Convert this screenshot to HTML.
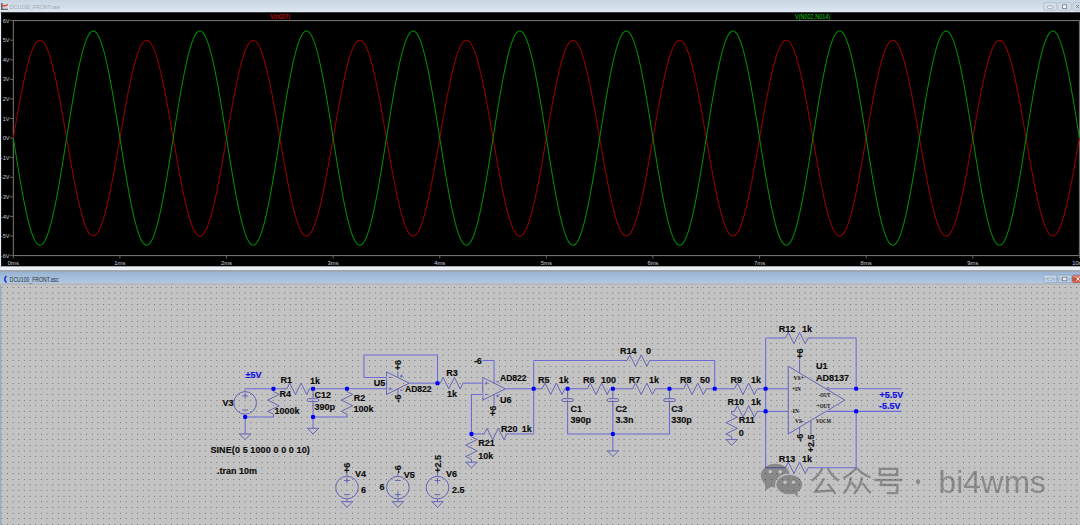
<!DOCTYPE html><html><head><meta charset="utf-8"><style>
html,body{margin:0;padding:0;background:#c3c3c3;width:1080px;height:525px;overflow:hidden}
svg{display:block}
text{font-family:"Liberation Sans",sans-serif}
.t{font-weight:bold;font-size:9px;fill:#0c0c0c;stroke:#0c0c0c;stroke-width:0.15px}
.b{font-weight:bold;font-size:9px;fill:#1010e0;stroke:#1010e0;stroke-width:0.15px}
.ax{font-size:5.7px;fill:#c4ccd8}
.w{stroke:#6a6ad8;stroke-width:1.05;fill:none}
.h{stroke:#c3c3c3;stroke-width:2.6;fill:none}
.c{stroke:#6060b8;stroke-width:0.95;fill:none}
.p{font-size:5.2px;font-weight:bold;fill:#101010;font-family:"Liberation Serif",serif}
</style></head><body>
<svg width="1080" height="525" viewBox="0 0 1080 525">
<defs>
<linearGradient id="tb1" x1="0" y1="0" x2="0" y2="1"><stop offset="0" stop-color="#c8d5e3"/><stop offset="1" stop-color="#dde7f2"/></linearGradient>
<linearGradient id="bt" x1="0" y1="0" x2="0" y2="1"><stop offset="0" stop-color="#d4e2f0"/><stop offset="0.5" stop-color="#a8c0dc"/><stop offset="1" stop-color="#c4d6ea"/></linearGradient>
<linearGradient id="tb2" x1="0" y1="0" x2="0" y2="1"><stop offset="0" stop-color="#98b3d3"/><stop offset="1" stop-color="#b2c9e3"/></linearGradient>
<pattern id="dots" x="24" y="292" width="130" height="130" patternUnits="userSpaceOnUse"><g fill="#8a8a8a"><rect x="0" y="0" width="1" height="1"/><rect x="6" y="0" width="1" height="1"/><rect x="11" y="0" width="1" height="1"/><rect x="17" y="0" width="1" height="1"/><rect x="23" y="0" width="1" height="1"/><rect x="28" y="0" width="1" height="1"/><rect x="34" y="0" width="1" height="1"/><rect x="40" y="0" width="1" height="1"/><rect x="45" y="0" width="1" height="1"/><rect x="51" y="0" width="1" height="1"/><rect x="57" y="0" width="1" height="1"/><rect x="62" y="0" width="1" height="1"/><rect x="68" y="0" width="1" height="1"/><rect x="73" y="0" width="1" height="1"/><rect x="79" y="0" width="1" height="1"/><rect x="85" y="0" width="1" height="1"/><rect x="90" y="0" width="1" height="1"/><rect x="96" y="0" width="1" height="1"/><rect x="102" y="0" width="1" height="1"/><rect x="107" y="0" width="1" height="1"/><rect x="113" y="0" width="1" height="1"/><rect x="119" y="0" width="1" height="1"/><rect x="124" y="0" width="1" height="1"/><rect x="0" y="6" width="1" height="1"/><rect x="6" y="6" width="1" height="1"/><rect x="11" y="6" width="1" height="1"/><rect x="17" y="6" width="1" height="1"/><rect x="23" y="6" width="1" height="1"/><rect x="28" y="6" width="1" height="1"/><rect x="34" y="6" width="1" height="1"/><rect x="40" y="6" width="1" height="1"/><rect x="45" y="6" width="1" height="1"/><rect x="51" y="6" width="1" height="1"/><rect x="57" y="6" width="1" height="1"/><rect x="62" y="6" width="1" height="1"/><rect x="68" y="6" width="1" height="1"/><rect x="73" y="6" width="1" height="1"/><rect x="79" y="6" width="1" height="1"/><rect x="85" y="6" width="1" height="1"/><rect x="90" y="6" width="1" height="1"/><rect x="96" y="6" width="1" height="1"/><rect x="102" y="6" width="1" height="1"/><rect x="107" y="6" width="1" height="1"/><rect x="113" y="6" width="1" height="1"/><rect x="119" y="6" width="1" height="1"/><rect x="124" y="6" width="1" height="1"/><rect x="0" y="12" width="1" height="1"/><rect x="6" y="12" width="1" height="1"/><rect x="11" y="12" width="1" height="1"/><rect x="17" y="12" width="1" height="1"/><rect x="23" y="12" width="1" height="1"/><rect x="28" y="12" width="1" height="1"/><rect x="34" y="12" width="1" height="1"/><rect x="40" y="12" width="1" height="1"/><rect x="45" y="12" width="1" height="1"/><rect x="51" y="12" width="1" height="1"/><rect x="57" y="12" width="1" height="1"/><rect x="62" y="12" width="1" height="1"/><rect x="68" y="12" width="1" height="1"/><rect x="73" y="12" width="1" height="1"/><rect x="79" y="12" width="1" height="1"/><rect x="85" y="12" width="1" height="1"/><rect x="90" y="12" width="1" height="1"/><rect x="96" y="12" width="1" height="1"/><rect x="102" y="12" width="1" height="1"/><rect x="107" y="12" width="1" height="1"/><rect x="113" y="12" width="1" height="1"/><rect x="119" y="12" width="1" height="1"/><rect x="124" y="12" width="1" height="1"/><rect x="0" y="17" width="1" height="1"/><rect x="6" y="17" width="1" height="1"/><rect x="11" y="17" width="1" height="1"/><rect x="17" y="17" width="1" height="1"/><rect x="23" y="17" width="1" height="1"/><rect x="28" y="17" width="1" height="1"/><rect x="34" y="17" width="1" height="1"/><rect x="40" y="17" width="1" height="1"/><rect x="45" y="17" width="1" height="1"/><rect x="51" y="17" width="1" height="1"/><rect x="57" y="17" width="1" height="1"/><rect x="62" y="17" width="1" height="1"/><rect x="68" y="17" width="1" height="1"/><rect x="73" y="17" width="1" height="1"/><rect x="79" y="17" width="1" height="1"/><rect x="85" y="17" width="1" height="1"/><rect x="90" y="17" width="1" height="1"/><rect x="96" y="17" width="1" height="1"/><rect x="102" y="17" width="1" height="1"/><rect x="107" y="17" width="1" height="1"/><rect x="113" y="17" width="1" height="1"/><rect x="119" y="17" width="1" height="1"/><rect x="124" y="17" width="1" height="1"/><rect x="0" y="23" width="1" height="1"/><rect x="6" y="23" width="1" height="1"/><rect x="11" y="23" width="1" height="1"/><rect x="17" y="23" width="1" height="1"/><rect x="23" y="23" width="1" height="1"/><rect x="28" y="23" width="1" height="1"/><rect x="34" y="23" width="1" height="1"/><rect x="40" y="23" width="1" height="1"/><rect x="45" y="23" width="1" height="1"/><rect x="51" y="23" width="1" height="1"/><rect x="57" y="23" width="1" height="1"/><rect x="62" y="23" width="1" height="1"/><rect x="68" y="23" width="1" height="1"/><rect x="73" y="23" width="1" height="1"/><rect x="79" y="23" width="1" height="1"/><rect x="85" y="23" width="1" height="1"/><rect x="90" y="23" width="1" height="1"/><rect x="96" y="23" width="1" height="1"/><rect x="102" y="23" width="1" height="1"/><rect x="107" y="23" width="1" height="1"/><rect x="113" y="23" width="1" height="1"/><rect x="119" y="23" width="1" height="1"/><rect x="124" y="23" width="1" height="1"/><rect x="0" y="29" width="1" height="1"/><rect x="6" y="29" width="1" height="1"/><rect x="11" y="29" width="1" height="1"/><rect x="17" y="29" width="1" height="1"/><rect x="23" y="29" width="1" height="1"/><rect x="28" y="29" width="1" height="1"/><rect x="34" y="29" width="1" height="1"/><rect x="40" y="29" width="1" height="1"/><rect x="45" y="29" width="1" height="1"/><rect x="51" y="29" width="1" height="1"/><rect x="57" y="29" width="1" height="1"/><rect x="62" y="29" width="1" height="1"/><rect x="68" y="29" width="1" height="1"/><rect x="73" y="29" width="1" height="1"/><rect x="79" y="29" width="1" height="1"/><rect x="85" y="29" width="1" height="1"/><rect x="90" y="29" width="1" height="1"/><rect x="96" y="29" width="1" height="1"/><rect x="102" y="29" width="1" height="1"/><rect x="107" y="29" width="1" height="1"/><rect x="113" y="29" width="1" height="1"/><rect x="119" y="29" width="1" height="1"/><rect x="124" y="29" width="1" height="1"/><rect x="0" y="34" width="1" height="1"/><rect x="6" y="34" width="1" height="1"/><rect x="11" y="34" width="1" height="1"/><rect x="17" y="34" width="1" height="1"/><rect x="23" y="34" width="1" height="1"/><rect x="28" y="34" width="1" height="1"/><rect x="34" y="34" width="1" height="1"/><rect x="40" y="34" width="1" height="1"/><rect x="45" y="34" width="1" height="1"/><rect x="51" y="34" width="1" height="1"/><rect x="57" y="34" width="1" height="1"/><rect x="62" y="34" width="1" height="1"/><rect x="68" y="34" width="1" height="1"/><rect x="73" y="34" width="1" height="1"/><rect x="79" y="34" width="1" height="1"/><rect x="85" y="34" width="1" height="1"/><rect x="90" y="34" width="1" height="1"/><rect x="96" y="34" width="1" height="1"/><rect x="102" y="34" width="1" height="1"/><rect x="107" y="34" width="1" height="1"/><rect x="113" y="34" width="1" height="1"/><rect x="119" y="34" width="1" height="1"/><rect x="124" y="34" width="1" height="1"/><rect x="0" y="40" width="1" height="1"/><rect x="6" y="40" width="1" height="1"/><rect x="11" y="40" width="1" height="1"/><rect x="17" y="40" width="1" height="1"/><rect x="23" y="40" width="1" height="1"/><rect x="28" y="40" width="1" height="1"/><rect x="34" y="40" width="1" height="1"/><rect x="40" y="40" width="1" height="1"/><rect x="45" y="40" width="1" height="1"/><rect x="51" y="40" width="1" height="1"/><rect x="57" y="40" width="1" height="1"/><rect x="62" y="40" width="1" height="1"/><rect x="68" y="40" width="1" height="1"/><rect x="73" y="40" width="1" height="1"/><rect x="79" y="40" width="1" height="1"/><rect x="85" y="40" width="1" height="1"/><rect x="90" y="40" width="1" height="1"/><rect x="96" y="40" width="1" height="1"/><rect x="102" y="40" width="1" height="1"/><rect x="107" y="40" width="1" height="1"/><rect x="113" y="40" width="1" height="1"/><rect x="119" y="40" width="1" height="1"/><rect x="124" y="40" width="1" height="1"/><rect x="0" y="45" width="1" height="1"/><rect x="6" y="45" width="1" height="1"/><rect x="11" y="45" width="1" height="1"/><rect x="17" y="45" width="1" height="1"/><rect x="23" y="45" width="1" height="1"/><rect x="28" y="45" width="1" height="1"/><rect x="34" y="45" width="1" height="1"/><rect x="40" y="45" width="1" height="1"/><rect x="45" y="45" width="1" height="1"/><rect x="51" y="45" width="1" height="1"/><rect x="57" y="45" width="1" height="1"/><rect x="62" y="45" width="1" height="1"/><rect x="68" y="45" width="1" height="1"/><rect x="73" y="45" width="1" height="1"/><rect x="79" y="45" width="1" height="1"/><rect x="85" y="45" width="1" height="1"/><rect x="90" y="45" width="1" height="1"/><rect x="96" y="45" width="1" height="1"/><rect x="102" y="45" width="1" height="1"/><rect x="107" y="45" width="1" height="1"/><rect x="113" y="45" width="1" height="1"/><rect x="119" y="45" width="1" height="1"/><rect x="124" y="45" width="1" height="1"/><rect x="0" y="51" width="1" height="1"/><rect x="6" y="51" width="1" height="1"/><rect x="11" y="51" width="1" height="1"/><rect x="17" y="51" width="1" height="1"/><rect x="23" y="51" width="1" height="1"/><rect x="28" y="51" width="1" height="1"/><rect x="34" y="51" width="1" height="1"/><rect x="40" y="51" width="1" height="1"/><rect x="45" y="51" width="1" height="1"/><rect x="51" y="51" width="1" height="1"/><rect x="57" y="51" width="1" height="1"/><rect x="62" y="51" width="1" height="1"/><rect x="68" y="51" width="1" height="1"/><rect x="73" y="51" width="1" height="1"/><rect x="79" y="51" width="1" height="1"/><rect x="85" y="51" width="1" height="1"/><rect x="90" y="51" width="1" height="1"/><rect x="96" y="51" width="1" height="1"/><rect x="102" y="51" width="1" height="1"/><rect x="107" y="51" width="1" height="1"/><rect x="113" y="51" width="1" height="1"/><rect x="119" y="51" width="1" height="1"/><rect x="124" y="51" width="1" height="1"/><rect x="0" y="57" width="1" height="1"/><rect x="6" y="57" width="1" height="1"/><rect x="11" y="57" width="1" height="1"/><rect x="17" y="57" width="1" height="1"/><rect x="23" y="57" width="1" height="1"/><rect x="28" y="57" width="1" height="1"/><rect x="34" y="57" width="1" height="1"/><rect x="40" y="57" width="1" height="1"/><rect x="45" y="57" width="1" height="1"/><rect x="51" y="57" width="1" height="1"/><rect x="57" y="57" width="1" height="1"/><rect x="62" y="57" width="1" height="1"/><rect x="68" y="57" width="1" height="1"/><rect x="73" y="57" width="1" height="1"/><rect x="79" y="57" width="1" height="1"/><rect x="85" y="57" width="1" height="1"/><rect x="90" y="57" width="1" height="1"/><rect x="96" y="57" width="1" height="1"/><rect x="102" y="57" width="1" height="1"/><rect x="107" y="57" width="1" height="1"/><rect x="113" y="57" width="1" height="1"/><rect x="119" y="57" width="1" height="1"/><rect x="124" y="57" width="1" height="1"/><rect x="0" y="62" width="1" height="1"/><rect x="6" y="62" width="1" height="1"/><rect x="11" y="62" width="1" height="1"/><rect x="17" y="62" width="1" height="1"/><rect x="23" y="62" width="1" height="1"/><rect x="28" y="62" width="1" height="1"/><rect x="34" y="62" width="1" height="1"/><rect x="40" y="62" width="1" height="1"/><rect x="45" y="62" width="1" height="1"/><rect x="51" y="62" width="1" height="1"/><rect x="57" y="62" width="1" height="1"/><rect x="62" y="62" width="1" height="1"/><rect x="68" y="62" width="1" height="1"/><rect x="73" y="62" width="1" height="1"/><rect x="79" y="62" width="1" height="1"/><rect x="85" y="62" width="1" height="1"/><rect x="90" y="62" width="1" height="1"/><rect x="96" y="62" width="1" height="1"/><rect x="102" y="62" width="1" height="1"/><rect x="107" y="62" width="1" height="1"/><rect x="113" y="62" width="1" height="1"/><rect x="119" y="62" width="1" height="1"/><rect x="124" y="62" width="1" height="1"/><rect x="0" y="68" width="1" height="1"/><rect x="6" y="68" width="1" height="1"/><rect x="11" y="68" width="1" height="1"/><rect x="17" y="68" width="1" height="1"/><rect x="23" y="68" width="1" height="1"/><rect x="28" y="68" width="1" height="1"/><rect x="34" y="68" width="1" height="1"/><rect x="40" y="68" width="1" height="1"/><rect x="45" y="68" width="1" height="1"/><rect x="51" y="68" width="1" height="1"/><rect x="57" y="68" width="1" height="1"/><rect x="62" y="68" width="1" height="1"/><rect x="68" y="68" width="1" height="1"/><rect x="73" y="68" width="1" height="1"/><rect x="79" y="68" width="1" height="1"/><rect x="85" y="68" width="1" height="1"/><rect x="90" y="68" width="1" height="1"/><rect x="96" y="68" width="1" height="1"/><rect x="102" y="68" width="1" height="1"/><rect x="107" y="68" width="1" height="1"/><rect x="113" y="68" width="1" height="1"/><rect x="119" y="68" width="1" height="1"/><rect x="124" y="68" width="1" height="1"/><rect x="0" y="74" width="1" height="1"/><rect x="6" y="74" width="1" height="1"/><rect x="11" y="74" width="1" height="1"/><rect x="17" y="74" width="1" height="1"/><rect x="23" y="74" width="1" height="1"/><rect x="28" y="74" width="1" height="1"/><rect x="34" y="74" width="1" height="1"/><rect x="40" y="74" width="1" height="1"/><rect x="45" y="74" width="1" height="1"/><rect x="51" y="74" width="1" height="1"/><rect x="57" y="74" width="1" height="1"/><rect x="62" y="74" width="1" height="1"/><rect x="68" y="74" width="1" height="1"/><rect x="73" y="74" width="1" height="1"/><rect x="79" y="74" width="1" height="1"/><rect x="85" y="74" width="1" height="1"/><rect x="90" y="74" width="1" height="1"/><rect x="96" y="74" width="1" height="1"/><rect x="102" y="74" width="1" height="1"/><rect x="107" y="74" width="1" height="1"/><rect x="113" y="74" width="1" height="1"/><rect x="119" y="74" width="1" height="1"/><rect x="124" y="74" width="1" height="1"/><rect x="0" y="79" width="1" height="1"/><rect x="6" y="79" width="1" height="1"/><rect x="11" y="79" width="1" height="1"/><rect x="17" y="79" width="1" height="1"/><rect x="23" y="79" width="1" height="1"/><rect x="28" y="79" width="1" height="1"/><rect x="34" y="79" width="1" height="1"/><rect x="40" y="79" width="1" height="1"/><rect x="45" y="79" width="1" height="1"/><rect x="51" y="79" width="1" height="1"/><rect x="57" y="79" width="1" height="1"/><rect x="62" y="79" width="1" height="1"/><rect x="68" y="79" width="1" height="1"/><rect x="73" y="79" width="1" height="1"/><rect x="79" y="79" width="1" height="1"/><rect x="85" y="79" width="1" height="1"/><rect x="90" y="79" width="1" height="1"/><rect x="96" y="79" width="1" height="1"/><rect x="102" y="79" width="1" height="1"/><rect x="107" y="79" width="1" height="1"/><rect x="113" y="79" width="1" height="1"/><rect x="119" y="79" width="1" height="1"/><rect x="124" y="79" width="1" height="1"/><rect x="0" y="85" width="1" height="1"/><rect x="6" y="85" width="1" height="1"/><rect x="11" y="85" width="1" height="1"/><rect x="17" y="85" width="1" height="1"/><rect x="23" y="85" width="1" height="1"/><rect x="28" y="85" width="1" height="1"/><rect x="34" y="85" width="1" height="1"/><rect x="40" y="85" width="1" height="1"/><rect x="45" y="85" width="1" height="1"/><rect x="51" y="85" width="1" height="1"/><rect x="57" y="85" width="1" height="1"/><rect x="62" y="85" width="1" height="1"/><rect x="68" y="85" width="1" height="1"/><rect x="73" y="85" width="1" height="1"/><rect x="79" y="85" width="1" height="1"/><rect x="85" y="85" width="1" height="1"/><rect x="90" y="85" width="1" height="1"/><rect x="96" y="85" width="1" height="1"/><rect x="102" y="85" width="1" height="1"/><rect x="107" y="85" width="1" height="1"/><rect x="113" y="85" width="1" height="1"/><rect x="119" y="85" width="1" height="1"/><rect x="124" y="85" width="1" height="1"/><rect x="0" y="91" width="1" height="1"/><rect x="6" y="91" width="1" height="1"/><rect x="11" y="91" width="1" height="1"/><rect x="17" y="91" width="1" height="1"/><rect x="23" y="91" width="1" height="1"/><rect x="28" y="91" width="1" height="1"/><rect x="34" y="91" width="1" height="1"/><rect x="40" y="91" width="1" height="1"/><rect x="45" y="91" width="1" height="1"/><rect x="51" y="91" width="1" height="1"/><rect x="57" y="91" width="1" height="1"/><rect x="62" y="91" width="1" height="1"/><rect x="68" y="91" width="1" height="1"/><rect x="73" y="91" width="1" height="1"/><rect x="79" y="91" width="1" height="1"/><rect x="85" y="91" width="1" height="1"/><rect x="90" y="91" width="1" height="1"/><rect x="96" y="91" width="1" height="1"/><rect x="102" y="91" width="1" height="1"/><rect x="107" y="91" width="1" height="1"/><rect x="113" y="91" width="1" height="1"/><rect x="119" y="91" width="1" height="1"/><rect x="124" y="91" width="1" height="1"/><rect x="0" y="96" width="1" height="1"/><rect x="6" y="96" width="1" height="1"/><rect x="11" y="96" width="1" height="1"/><rect x="17" y="96" width="1" height="1"/><rect x="23" y="96" width="1" height="1"/><rect x="28" y="96" width="1" height="1"/><rect x="34" y="96" width="1" height="1"/><rect x="40" y="96" width="1" height="1"/><rect x="45" y="96" width="1" height="1"/><rect x="51" y="96" width="1" height="1"/><rect x="57" y="96" width="1" height="1"/><rect x="62" y="96" width="1" height="1"/><rect x="68" y="96" width="1" height="1"/><rect x="73" y="96" width="1" height="1"/><rect x="79" y="96" width="1" height="1"/><rect x="85" y="96" width="1" height="1"/><rect x="90" y="96" width="1" height="1"/><rect x="96" y="96" width="1" height="1"/><rect x="102" y="96" width="1" height="1"/><rect x="107" y="96" width="1" height="1"/><rect x="113" y="96" width="1" height="1"/><rect x="119" y="96" width="1" height="1"/><rect x="124" y="96" width="1" height="1"/><rect x="0" y="102" width="1" height="1"/><rect x="6" y="102" width="1" height="1"/><rect x="11" y="102" width="1" height="1"/><rect x="17" y="102" width="1" height="1"/><rect x="23" y="102" width="1" height="1"/><rect x="28" y="102" width="1" height="1"/><rect x="34" y="102" width="1" height="1"/><rect x="40" y="102" width="1" height="1"/><rect x="45" y="102" width="1" height="1"/><rect x="51" y="102" width="1" height="1"/><rect x="57" y="102" width="1" height="1"/><rect x="62" y="102" width="1" height="1"/><rect x="68" y="102" width="1" height="1"/><rect x="73" y="102" width="1" height="1"/><rect x="79" y="102" width="1" height="1"/><rect x="85" y="102" width="1" height="1"/><rect x="90" y="102" width="1" height="1"/><rect x="96" y="102" width="1" height="1"/><rect x="102" y="102" width="1" height="1"/><rect x="107" y="102" width="1" height="1"/><rect x="113" y="102" width="1" height="1"/><rect x="119" y="102" width="1" height="1"/><rect x="124" y="102" width="1" height="1"/><rect x="0" y="108" width="1" height="1"/><rect x="6" y="108" width="1" height="1"/><rect x="11" y="108" width="1" height="1"/><rect x="17" y="108" width="1" height="1"/><rect x="23" y="108" width="1" height="1"/><rect x="28" y="108" width="1" height="1"/><rect x="34" y="108" width="1" height="1"/><rect x="40" y="108" width="1" height="1"/><rect x="45" y="108" width="1" height="1"/><rect x="51" y="108" width="1" height="1"/><rect x="57" y="108" width="1" height="1"/><rect x="62" y="108" width="1" height="1"/><rect x="68" y="108" width="1" height="1"/><rect x="73" y="108" width="1" height="1"/><rect x="79" y="108" width="1" height="1"/><rect x="85" y="108" width="1" height="1"/><rect x="90" y="108" width="1" height="1"/><rect x="96" y="108" width="1" height="1"/><rect x="102" y="108" width="1" height="1"/><rect x="107" y="108" width="1" height="1"/><rect x="113" y="108" width="1" height="1"/><rect x="119" y="108" width="1" height="1"/><rect x="124" y="108" width="1" height="1"/><rect x="0" y="113" width="1" height="1"/><rect x="6" y="113" width="1" height="1"/><rect x="11" y="113" width="1" height="1"/><rect x="17" y="113" width="1" height="1"/><rect x="23" y="113" width="1" height="1"/><rect x="28" y="113" width="1" height="1"/><rect x="34" y="113" width="1" height="1"/><rect x="40" y="113" width="1" height="1"/><rect x="45" y="113" width="1" height="1"/><rect x="51" y="113" width="1" height="1"/><rect x="57" y="113" width="1" height="1"/><rect x="62" y="113" width="1" height="1"/><rect x="68" y="113" width="1" height="1"/><rect x="73" y="113" width="1" height="1"/><rect x="79" y="113" width="1" height="1"/><rect x="85" y="113" width="1" height="1"/><rect x="90" y="113" width="1" height="1"/><rect x="96" y="113" width="1" height="1"/><rect x="102" y="113" width="1" height="1"/><rect x="107" y="113" width="1" height="1"/><rect x="113" y="113" width="1" height="1"/><rect x="119" y="113" width="1" height="1"/><rect x="124" y="113" width="1" height="1"/><rect x="0" y="119" width="1" height="1"/><rect x="6" y="119" width="1" height="1"/><rect x="11" y="119" width="1" height="1"/><rect x="17" y="119" width="1" height="1"/><rect x="23" y="119" width="1" height="1"/><rect x="28" y="119" width="1" height="1"/><rect x="34" y="119" width="1" height="1"/><rect x="40" y="119" width="1" height="1"/><rect x="45" y="119" width="1" height="1"/><rect x="51" y="119" width="1" height="1"/><rect x="57" y="119" width="1" height="1"/><rect x="62" y="119" width="1" height="1"/><rect x="68" y="119" width="1" height="1"/><rect x="73" y="119" width="1" height="1"/><rect x="79" y="119" width="1" height="1"/><rect x="85" y="119" width="1" height="1"/><rect x="90" y="119" width="1" height="1"/><rect x="96" y="119" width="1" height="1"/><rect x="102" y="119" width="1" height="1"/><rect x="107" y="119" width="1" height="1"/><rect x="113" y="119" width="1" height="1"/><rect x="119" y="119" width="1" height="1"/><rect x="124" y="119" width="1" height="1"/><rect x="0" y="125" width="1" height="1"/><rect x="6" y="125" width="1" height="1"/><rect x="11" y="125" width="1" height="1"/><rect x="17" y="125" width="1" height="1"/><rect x="23" y="125" width="1" height="1"/><rect x="28" y="125" width="1" height="1"/><rect x="34" y="125" width="1" height="1"/><rect x="40" y="125" width="1" height="1"/><rect x="45" y="125" width="1" height="1"/><rect x="51" y="125" width="1" height="1"/><rect x="57" y="125" width="1" height="1"/><rect x="62" y="125" width="1" height="1"/><rect x="68" y="125" width="1" height="1"/><rect x="73" y="125" width="1" height="1"/><rect x="79" y="125" width="1" height="1"/><rect x="85" y="125" width="1" height="1"/><rect x="90" y="125" width="1" height="1"/><rect x="96" y="125" width="1" height="1"/><rect x="102" y="125" width="1" height="1"/><rect x="107" y="125" width="1" height="1"/><rect x="113" y="125" width="1" height="1"/><rect x="119" y="125" width="1" height="1"/><rect x="124" y="125" width="1" height="1"/></g></pattern>
</defs>

<rect x="0" y="0" width="1080" height="12.3" fill="url(#tb1)"/>
<rect x="1.2" y="3" width="6.8" height="6.8" fill="#d4d6d8"/><rect x="1.2" y="3" width="1.3" height="6.8" fill="#505050"/><rect x="1.2" y="8.8" width="6.8" height="1" fill="#505050"/><path d="M2.2 6.6 L3.8 5.4 L5 6.2 L7.8 4.6" stroke="#e82020" stroke-width="1.1" fill="none"/>
<text x="10" y="8.8" textLength="50" lengthAdjust="spacingAndGlyphs" style="font-size:6.2px;fill:#a0a6ae">DCU100_FRONT.raw</text>
<rect x="1043.4" y="2.6" width="13.3" height="7.8" rx="1.5" fill="#d3dde8" stroke="#a9b7c7" stroke-width="0.7"/>
<rect x="1058" y="2.6" width="13.3" height="7.8" rx="1.5" fill="#d3dde8" stroke="#a9b7c7" stroke-width="0.7"/>
<rect x="1047.4" y="6" width="5.5" height="2.4" rx="1.2" fill="#f4f6f8" stroke="#7c848e" stroke-width="0.6"/>
<rect x="1062.5" y="4.8" width="4.2" height="3.6" fill="#f4f6f8" stroke="#7c848e" stroke-width="0.9"/>
<rect x="1073" y="2.6" width="10" height="7.8" rx="1.5" fill="#d3dde8" stroke="#a9b7c7" stroke-width="0.7"/><path d="M1076 4.8 L1079 8.2 M1079 4.8 L1076 8.2" stroke="#7c848e" stroke-width="1"/>
<rect x="0" y="12.3" width="1080" height="254.2" fill="#000"/>
<rect x="0" y="12.3" width="1.1" height="254.2" fill="#e6ecf3"/>
<path d="M13.3 20.6 H1079.4 V255.6 H13.3 Z" stroke="#7c7c7c" stroke-width="1" fill="none"/>
<path d="M10 20.60 H13.3" stroke="#7c7c7c" stroke-width="0.8"/>
<text class="ax" x="9.6" y="22.70" text-anchor="end">6V</text>
<path d="M10 40.18 H13.3" stroke="#7c7c7c" stroke-width="0.8"/>
<text class="ax" x="9.6" y="42.28" text-anchor="end">5V</text>
<path d="M10 59.77 H13.3" stroke="#7c7c7c" stroke-width="0.8"/>
<text class="ax" x="9.6" y="61.87" text-anchor="end">4V</text>
<path d="M10 79.35 H13.3" stroke="#7c7c7c" stroke-width="0.8"/>
<text class="ax" x="9.6" y="81.45" text-anchor="end">3V</text>
<path d="M10 98.93 H13.3" stroke="#7c7c7c" stroke-width="0.8"/>
<text class="ax" x="9.6" y="101.03" text-anchor="end">2V</text>
<path d="M10 118.52 H13.3" stroke="#7c7c7c" stroke-width="0.8"/>
<text class="ax" x="9.6" y="120.62" text-anchor="end">1V</text>
<path d="M10 138.10 H13.3" stroke="#7c7c7c" stroke-width="0.8"/>
<text class="ax" x="9.6" y="140.20" text-anchor="end">0V</text>
<path d="M10 157.68 H13.3" stroke="#7c7c7c" stroke-width="0.8"/>
<text class="ax" x="9.6" y="159.78" text-anchor="end">-1V</text>
<path d="M10 177.27 H13.3" stroke="#7c7c7c" stroke-width="0.8"/>
<text class="ax" x="9.6" y="179.37" text-anchor="end">-2V</text>
<path d="M10 196.85 H13.3" stroke="#7c7c7c" stroke-width="0.8"/>
<text class="ax" x="9.6" y="198.95" text-anchor="end">-3V</text>
<path d="M10 216.43 H13.3" stroke="#7c7c7c" stroke-width="0.8"/>
<text class="ax" x="9.6" y="218.53" text-anchor="end">-4V</text>
<path d="M10 236.02 H13.3" stroke="#7c7c7c" stroke-width="0.8"/>
<text class="ax" x="9.6" y="238.12" text-anchor="end">-5V</text>
<path d="M10 255.60 H13.3" stroke="#7c7c7c" stroke-width="0.8"/>
<text class="ax" x="9.6" y="257.70" text-anchor="end">-6V</text>
<path d="M13.30 255.6 V258.5" stroke="#7c7c7c" stroke-width="0.8"/>
<text class="ax" x="13.30" y="264.7" text-anchor="middle" style="font-size:5.9px">0ms</text>
<path d="M119.91 255.6 V258.5" stroke="#7c7c7c" stroke-width="0.8"/>
<text class="ax" x="119.91" y="264.7" text-anchor="middle" style="font-size:5.9px">1ms</text>
<path d="M226.52 255.6 V258.5" stroke="#7c7c7c" stroke-width="0.8"/>
<text class="ax" x="226.52" y="264.7" text-anchor="middle" style="font-size:5.9px">2ms</text>
<path d="M333.13 255.6 V258.5" stroke="#7c7c7c" stroke-width="0.8"/>
<text class="ax" x="333.13" y="264.7" text-anchor="middle" style="font-size:5.9px">3ms</text>
<path d="M439.74 255.6 V258.5" stroke="#7c7c7c" stroke-width="0.8"/>
<text class="ax" x="439.74" y="264.7" text-anchor="middle" style="font-size:5.9px">4ms</text>
<path d="M546.35 255.6 V258.5" stroke="#7c7c7c" stroke-width="0.8"/>
<text class="ax" x="546.35" y="264.7" text-anchor="middle" style="font-size:5.9px">5ms</text>
<path d="M652.96 255.6 V258.5" stroke="#7c7c7c" stroke-width="0.8"/>
<text class="ax" x="652.96" y="264.7" text-anchor="middle" style="font-size:5.9px">6ms</text>
<path d="M759.57 255.6 V258.5" stroke="#7c7c7c" stroke-width="0.8"/>
<text class="ax" x="759.57" y="264.7" text-anchor="middle" style="font-size:5.9px">7ms</text>
<path d="M866.18 255.6 V258.5" stroke="#7c7c7c" stroke-width="0.8"/>
<text class="ax" x="866.18" y="264.7" text-anchor="middle" style="font-size:5.9px">8ms</text>
<path d="M972.79 255.6 V258.5" stroke="#7c7c7c" stroke-width="0.8"/>
<text class="ax" x="972.79" y="264.7" text-anchor="middle" style="font-size:5.9px">9ms</text>
<path d="M1079.40 255.6 V258.5" stroke="#7c7c7c" stroke-width="0.8"/>
<text class="ax" x="1079.40" y="264.7" text-anchor="middle" style="font-size:5.9px">10ms</text>
<text x="270.2" y="19.2" textLength="20" lengthAdjust="spacingAndGlyphs" style="font-size:6.9px;fill:#e41010">V(n007)</text>
<text x="795" y="19.2" textLength="35.2" lengthAdjust="spacingAndGlyphs" style="font-size:6.9px;fill:#10d010">V(N002,N014)</text>
<clipPath id="pc"><rect x="12.3" y="20.6" width="1068.1000000000001" height="235.0"/></clipPath><g clip-path="url(#pc)">
<path d="M13.3 138.10 L14.3 132.33 L15.3 126.59 L16.3 120.88 L17.3 115.23 L18.3 109.66 L19.3 104.19 L20.3 98.84 L21.3 93.62 L22.3 88.56 L23.3 83.67 L24.3 78.97 L25.3 74.48 L26.3 70.21 L27.3 66.17 L28.3 62.38 L29.3 58.85 L30.3 55.60 L31.3 52.64 L32.3 49.97 L33.3 47.61 L34.3 45.57 L35.3 43.84 L36.3 42.44 L37.3 41.38 L38.3 40.65 L39.3 40.26 L40.3 40.20 L41.3 40.49 L42.3 41.12 L43.3 42.08 L44.3 43.38 L45.3 45.01 L46.3 46.96 L47.3 49.22 L48.3 51.80 L49.3 54.67 L50.3 57.83 L51.3 61.28 L52.3 64.99 L53.3 68.95 L54.3 73.15 L55.3 77.58 L56.3 82.22 L57.3 87.05 L58.3 92.06 L59.3 97.23 L60.3 102.55 L61.3 107.98 L62.3 113.52 L63.3 119.15 L64.3 124.84 L65.3 130.58 L66.3 136.34 L67.3 142.11 L68.3 147.87 L69.3 153.59 L70.3 159.26 L71.3 164.85 L72.3 170.35 L73.3 175.74 L74.3 181.00 L75.3 186.11 L76.3 191.05 L77.3 195.81 L78.3 200.37 L79.3 204.71 L80.3 208.83 L81.3 212.69 L82.3 216.30 L83.3 219.63 L84.3 222.69 L85.3 225.44 L86.3 227.90 L87.3 230.04 L88.3 231.87 L89.3 233.37 L90.3 234.53 L91.3 235.37 L92.3 235.86 L93.3 236.02 L94.3 235.83 L95.3 235.31 L96.3 234.45 L97.3 233.25 L98.3 231.72 L99.3 229.87 L100.3 227.70 L101.3 225.22 L102.3 222.44 L103.3 219.36 L104.3 216.00 L105.3 212.37 L106.3 208.49 L107.3 204.35 L108.3 199.99 L109.3 195.42 L110.3 190.64 L111.3 185.68 L112.3 180.56 L113.3 175.29 L114.3 169.89 L115.3 164.38 L116.3 158.78 L117.3 153.10 L118.3 147.38 L119.3 141.62 L120.3 135.85 L121.3 130.09 L122.3 124.35 L123.3 118.67 L124.3 113.05 L125.3 107.52 L126.3 102.09 L127.3 96.79 L128.3 91.63 L129.3 86.64 L130.3 81.82 L131.3 77.20 L132.3 72.79 L133.3 68.60 L134.3 64.66 L135.3 60.97 L136.3 57.55 L137.3 54.41 L138.3 51.57 L139.3 49.02 L140.3 46.78 L141.3 44.86 L142.3 43.26 L143.3 41.99 L144.3 41.05 L145.3 40.45 L146.3 40.20 L147.3 40.28 L148.3 40.70 L149.3 41.45 L150.3 42.55 L151.3 43.98 L152.3 45.73 L153.3 47.80 L154.3 50.19 L155.3 52.88 L156.3 55.87 L157.3 59.14 L158.3 62.69 L159.3 66.50 L160.3 70.56 L161.3 74.85 L162.3 79.37 L163.3 84.08 L164.3 88.99 L165.3 94.06 L166.3 99.29 L167.3 104.65 L168.3 110.13 L169.3 115.71 L170.3 121.36 L171.3 127.07 L172.3 132.82 L173.3 138.59 L174.3 144.36 L175.3 150.10 L176.3 155.81 L177.3 161.45 L178.3 167.01 L179.3 172.47 L180.3 177.81 L181.3 183.01 L182.3 188.06 L183.3 192.93 L184.3 197.62 L185.3 202.09 L186.3 206.35 L187.3 210.36 L188.3 214.13 L189.3 217.63 L190.3 220.86 L191.3 223.80 L192.3 226.44 L193.3 228.77 L194.3 230.79 L195.3 232.49 L196.3 233.86 L197.3 234.90 L198.3 235.60 L199.3 235.96 L200.3 235.98 L201.3 235.67 L202.3 235.01 L203.3 234.02 L204.3 232.69 L205.3 231.04 L206.3 229.06 L207.3 226.77 L208.3 224.17 L209.3 221.27 L210.3 218.08 L211.3 214.62 L212.3 210.89 L213.3 206.90 L214.3 202.68 L215.3 198.23 L216.3 193.58 L217.3 188.73 L218.3 183.70 L219.3 178.52 L220.3 173.20 L221.3 167.75 L222.3 162.20 L223.3 156.57 L224.3 150.87 L225.3 145.13 L226.3 139.37 L227.3 133.60 L228.3 127.85 L229.3 122.13 L230.3 116.47 L231.3 110.88 L232.3 105.39 L233.3 100.01 L234.3 94.76 L235.3 89.66 L236.3 84.73 L237.3 79.99 L238.3 75.45 L239.3 71.13 L240.3 67.04 L241.3 63.19 L242.3 59.61 L243.3 56.30 L244.3 53.27 L245.3 50.54 L246.3 48.11 L247.3 45.99 L248.3 44.19 L249.3 42.72 L250.3 41.58 L251.3 40.78 L252.3 40.31 L253.3 40.19 L254.3 40.40 L255.3 40.95 L256.3 41.84 L257.3 43.07 L258.3 44.62 L259.3 46.50 L260.3 48.70 L261.3 51.20 L262.3 54.01 L263.3 57.11 L264.3 60.50 L265.3 64.15 L266.3 68.06 L267.3 72.21 L268.3 76.59 L269.3 81.18 L270.3 85.97 L271.3 90.95 L272.3 96.08 L273.3 101.37 L274.3 106.78 L275.3 112.30 L276.3 117.90 L277.3 123.58 L278.3 129.31 L279.3 135.07 L280.3 140.84 L281.3 146.60 L282.3 152.33 L283.3 158.01 L284.3 163.63 L285.3 169.15 L286.3 174.57 L287.3 179.86 L288.3 185.00 L289.3 189.98 L290.3 194.78 L291.3 199.39 L292.3 203.78 L293.3 207.94 L294.3 211.86 L295.3 215.53 L296.3 218.92 L297.3 222.04 L298.3 224.86 L299.3 227.39 L300.3 229.60 L301.3 231.49 L302.3 233.06 L303.3 234.30 L304.3 235.21 L305.3 235.78 L306.3 236.01 L307.3 235.90 L308.3 235.45 L309.3 234.67 L310.3 233.54 L311.3 232.09 L312.3 230.31 L313.3 228.21 L314.3 225.79 L315.3 223.08 L316.3 220.06 L317.3 216.76 L318.3 213.19 L319.3 209.36 L320.3 205.28 L321.3 200.97 L322.3 196.44 L323.3 191.71 L324.3 186.79 L325.3 181.70 L326.3 176.46 L327.3 171.09 L328.3 165.60 L329.3 160.02 L330.3 154.36 L331.3 148.64 L332.3 142.89 L333.3 137.12 L334.3 131.35 L335.3 125.61 L336.3 119.91 L337.3 114.28 L338.3 108.72 L339.3 103.27 L340.3 97.94 L341.3 92.75 L342.3 87.72 L343.3 82.86 L344.3 78.20 L345.3 73.74 L346.3 69.50 L347.3 65.51 L348.3 61.76 L349.3 58.28 L350.3 55.08 L351.3 52.17 L352.3 49.55 L353.3 47.24 L354.3 45.25 L355.3 43.58 L356.3 42.24 L357.3 41.23 L358.3 40.56 L359.3 40.22 L360.3 40.23 L361.3 40.57 L362.3 41.26 L363.3 42.28 L364.3 43.63 L365.3 45.31 L366.3 47.32 L367.3 49.64 L368.3 52.26 L369.3 55.19 L370.3 58.40 L371.3 61.89 L372.3 65.64 L373.3 69.65 L374.3 73.89 L375.3 78.36 L376.3 83.03 L377.3 87.89 L378.3 92.93 L379.3 98.13 L380.3 103.46 L381.3 108.92 L382.3 114.47 L383.3 120.11 L384.3 125.81 L385.3 131.55 L386.3 137.32 L387.3 143.09 L388.3 148.84 L389.3 154.55 L390.3 160.21 L391.3 165.79 L392.3 171.28 L393.3 176.64 L394.3 181.88 L395.3 186.96 L396.3 191.88 L397.3 196.60 L398.3 201.13 L399.3 205.43 L400.3 209.50 L401.3 213.32 L402.3 216.88 L403.3 220.17 L404.3 223.18 L405.3 225.88 L406.3 228.29 L407.3 230.38 L408.3 232.14 L409.3 233.59 L410.3 234.70 L411.3 235.47 L412.3 235.91 L413.3 236.01 L414.3 235.77 L415.3 235.19 L416.3 234.27 L417.3 233.01 L418.3 231.43 L419.3 229.53 L420.3 227.30 L421.3 224.77 L422.3 221.94 L423.3 218.81 L424.3 215.40 L425.3 211.73 L426.3 207.80 L427.3 203.63 L428.3 199.23 L429.3 194.62 L430.3 189.81 L431.3 184.82 L432.3 179.67 L433.3 174.38 L434.3 168.96 L435.3 163.43 L436.3 157.82 L437.3 152.13 L438.3 146.40 L439.3 140.64 L440.3 134.87 L441.3 129.11 L442.3 123.38 L443.3 117.71 L444.3 112.10 L445.3 106.59 L446.3 101.18 L447.3 95.90 L448.3 90.77 L449.3 85.80 L450.3 81.02 L451.3 76.43 L452.3 72.06 L453.3 67.92 L454.3 64.02 L455.3 60.37 L456.3 57.00 L457.3 53.91 L458.3 51.11 L459.3 48.61 L460.3 46.43 L461.3 44.56 L462.3 43.02 L463.3 41.81 L464.3 40.93 L465.3 40.39 L466.3 40.18 L467.3 40.32 L468.3 40.80 L469.3 41.62 L470.3 42.77 L471.3 44.25 L472.3 46.06 L473.3 48.19 L474.3 50.63 L475.3 53.37 L476.3 56.41 L477.3 59.73 L478.3 63.32 L479.3 67.17 L480.3 71.27 L481.3 75.61 L482.3 80.15 L483.3 84.90 L484.3 89.84 L485.3 94.94 L486.3 100.19 L487.3 105.58 L488.3 111.07 L489.3 116.66 L490.3 122.33 L491.3 128.05 L492.3 133.80 L493.3 139.57 L494.3 145.34 L495.3 151.07 L496.3 156.77 L497.3 162.40 L498.3 167.94 L499.3 173.38 L500.3 178.70 L501.3 183.88 L502.3 188.90 L503.3 193.74 L504.3 198.39 L505.3 202.83 L506.3 207.05 L507.3 211.02 L508.3 214.74 L509.3 218.20 L510.3 221.38 L511.3 224.27 L512.3 226.86 L513.3 229.14 L514.3 231.10 L515.3 232.75 L516.3 234.06 L517.3 235.04 L518.3 235.68 L519.3 235.99 L520.3 235.95 L521.3 235.58 L522.3 234.87 L523.3 233.82 L524.3 232.44 L525.3 230.73 L526.3 228.70 L527.3 226.35 L528.3 223.70 L529.3 220.75 L530.3 217.51 L531.3 214.00 L532.3 210.23 L533.3 206.20 L534.3 201.94 L535.3 197.45 L536.3 192.76 L537.3 187.88 L538.3 182.83 L539.3 177.62 L540.3 172.28 L541.3 166.81 L542.3 161.25 L543.3 155.61 L544.3 149.90 L545.3 144.16 L546.3 138.39 L547.3 132.62 L548.3 126.87 L549.3 121.16 L550.3 115.51 L551.3 109.94 L552.3 104.46 L553.3 99.10 L554.3 93.88 L555.3 88.81 L556.3 83.92 L557.3 79.21 L558.3 74.70 L559.3 70.41 L560.3 66.36 L561.3 62.56 L562.3 59.02 L563.3 55.76 L564.3 52.78 L565.3 50.10 L566.3 47.72 L567.3 45.66 L568.3 43.92 L569.3 42.51 L570.3 41.42 L571.3 40.68 L572.3 40.27 L573.3 40.20 L574.3 40.47 L575.3 41.08 L576.3 42.03 L577.3 43.31 L578.3 44.92 L579.3 46.85 L580.3 49.10 L581.3 51.66 L582.3 54.52 L583.3 57.67 L584.3 61.10 L585.3 64.79 L586.3 68.75 L587.3 72.94 L588.3 77.35 L589.3 81.98 L590.3 86.81 L591.3 91.81 L592.3 96.97 L593.3 102.28 L594.3 107.71 L595.3 113.24 L596.3 118.86 L597.3 124.55 L598.3 130.29 L599.3 136.05 L600.3 141.82 L601.3 147.58 L602.3 153.30 L603.3 158.97 L604.3 164.57 L605.3 170.08 L606.3 175.47 L607.3 180.74 L608.3 185.86 L609.3 190.81 L610.3 195.58 L611.3 200.15 L612.3 204.50 L613.3 208.63 L614.3 212.50 L615.3 216.12 L616.3 219.47 L617.3 222.54 L618.3 225.31 L619.3 227.78 L620.3 229.94 L621.3 231.78 L622.3 233.30 L623.3 234.48 L624.3 235.33 L625.3 235.84 L626.3 236.02 L627.3 235.85 L628.3 235.34 L629.3 234.50 L630.3 233.32 L631.3 231.81 L632.3 229.97 L633.3 227.82 L634.3 225.35 L635.3 222.58 L636.3 219.52 L637.3 216.18 L638.3 212.56 L639.3 208.69 L640.3 204.57 L641.3 200.22 L642.3 195.65 L643.3 190.88 L644.3 185.93 L645.3 180.82 L646.3 175.55 L647.3 170.16 L648.3 164.66 L649.3 159.06 L650.3 153.39 L651.3 147.66 L652.3 141.91 L653.3 136.14 L654.3 130.38 L655.3 124.64 L656.3 118.95 L657.3 113.33 L658.3 107.79 L659.3 102.36 L660.3 97.05 L661.3 91.89 L662.3 86.88 L663.3 82.05 L664.3 77.42 L665.3 73.00 L666.3 68.81 L667.3 64.85 L668.3 61.15 L669.3 57.72 L670.3 54.56 L671.3 51.70 L672.3 49.14 L673.3 46.88 L674.3 44.94 L675.3 43.33 L676.3 42.04 L677.3 41.09 L678.3 40.48 L679.3 40.20 L680.3 40.26 L681.3 40.67 L682.3 41.41 L683.3 42.49 L684.3 43.90 L685.3 45.63 L686.3 47.69 L687.3 50.06 L688.3 52.74 L689.3 55.71 L690.3 58.97 L691.3 62.51 L692.3 66.31 L693.3 70.35 L694.3 74.63 L695.3 79.14 L696.3 83.84 L697.3 88.74 L698.3 93.80 L699.3 99.03 L700.3 104.38 L701.3 109.85 L702.3 115.43 L703.3 121.08 L704.3 126.79 L705.3 132.53 L706.3 138.30 L707.3 144.07 L708.3 149.82 L709.3 155.52 L710.3 161.17 L711.3 166.73 L712.3 172.20 L713.3 177.54 L714.3 182.75 L715.3 187.81 L716.3 192.69 L717.3 197.39 L718.3 201.87 L719.3 206.14 L720.3 210.17 L721.3 213.95 L722.3 217.46 L723.3 220.70 L724.3 223.66 L725.3 226.31 L726.3 228.66 L727.3 230.70 L728.3 232.41 L729.3 233.80 L730.3 234.85 L731.3 235.57 L732.3 235.95 L733.3 235.99 L734.3 235.69 L735.3 235.05 L736.3 234.08 L737.3 232.77 L738.3 231.13 L739.3 229.17 L740.3 226.89 L741.3 224.31 L742.3 221.42 L743.3 218.25 L744.3 214.80 L745.3 211.08 L746.3 207.11 L747.3 202.90 L748.3 198.46 L749.3 193.81 L750.3 188.97 L751.3 183.96 L752.3 178.78 L753.3 173.47 L754.3 168.03 L755.3 162.48 L756.3 156.85 L757.3 151.16 L758.3 145.42 L759.3 139.66 L760.3 133.89 L761.3 128.13 L762.3 122.41 L763.3 116.75 L764.3 111.16 L765.3 105.66 L766.3 100.27 L767.3 95.02 L768.3 89.91 L769.3 84.98 L770.3 80.22 L771.3 75.67 L772.3 71.34 L773.3 67.23 L774.3 63.38 L775.3 59.78 L776.3 56.45 L777.3 53.41 L778.3 50.66 L779.3 48.22 L780.3 46.09 L781.3 44.28 L782.3 42.79 L783.3 41.63 L784.3 40.81 L785.3 40.33 L786.3 40.18 L787.3 40.38 L788.3 40.92 L789.3 41.79 L790.3 43.00 L791.3 44.53 L792.3 46.40 L793.3 48.58 L794.3 51.07 L795.3 53.87 L796.3 56.95 L797.3 60.32 L798.3 63.96 L799.3 67.85 L800.3 71.99 L801.3 76.36 L802.3 80.95 L803.3 85.73 L804.3 90.69 L805.3 95.82 L806.3 101.10 L807.3 106.50 L808.3 112.02 L809.3 117.62 L810.3 123.30 L811.3 129.02 L812.3 134.78 L813.3 140.55 L814.3 146.31 L815.3 152.05 L816.3 157.73 L817.3 163.35 L818.3 168.88 L819.3 174.30 L820.3 179.59 L821.3 184.75 L822.3 189.74 L823.3 194.55 L824.3 199.16 L825.3 203.56 L826.3 207.74 L827.3 211.67 L828.3 215.35 L829.3 218.76 L830.3 221.89 L831.3 224.73 L832.3 227.27 L833.3 229.50 L834.3 231.41 L835.3 232.99 L836.3 234.25 L837.3 235.17 L838.3 235.76 L839.3 236.01 L840.3 235.92 L841.3 235.48 L842.3 234.71 L843.3 233.61 L844.3 232.17 L845.3 230.40 L846.3 228.32 L847.3 225.92 L848.3 223.22 L849.3 220.22 L850.3 216.94 L851.3 213.38 L852.3 209.56 L853.3 205.49 L854.3 201.19 L855.3 196.67 L856.3 191.95 L857.3 187.04 L858.3 181.96 L859.3 176.72 L860.3 171.36 L861.3 165.88 L862.3 160.30 L863.3 154.64 L864.3 148.93 L865.3 143.18 L866.3 137.41 L867.3 131.64 L868.3 125.90 L869.3 120.20 L870.3 114.56 L871.3 109.00 L872.3 103.54 L873.3 98.21 L874.3 93.01 L875.3 87.97 L876.3 83.10 L877.3 78.42 L878.3 73.96 L879.3 69.71 L880.3 65.70 L881.3 61.94 L882.3 58.45 L883.3 55.23 L884.3 52.31 L885.3 49.67 L886.3 47.35 L887.3 45.34 L888.3 43.66 L889.3 42.30 L890.3 41.27 L891.3 40.58 L892.3 40.23 L893.3 40.22 L894.3 40.55 L895.3 41.22 L896.3 42.22 L897.3 43.56 L898.3 45.22 L899.3 47.21 L900.3 49.51 L901.3 52.13 L902.3 55.03 L903.3 58.23 L904.3 61.71 L905.3 65.45 L906.3 69.44 L907.3 73.67 L908.3 78.13 L909.3 82.79 L910.3 87.65 L911.3 92.68 L912.3 97.86 L913.3 103.19 L914.3 108.64 L915.3 114.19 L916.3 119.83 L917.3 125.53 L918.3 131.27 L919.3 137.03 L920.3 142.80 L921.3 148.55 L922.3 154.27 L923.3 159.93 L924.3 165.52 L925.3 171.00 L926.3 176.38 L927.3 181.62 L928.3 186.71 L929.3 191.63 L930.3 196.37 L931.3 200.90 L932.3 205.22 L933.3 209.30 L934.3 213.14 L935.3 216.71 L936.3 220.02 L937.3 223.03 L938.3 225.76 L939.3 228.17 L940.3 230.28 L941.3 232.06 L942.3 233.52 L943.3 234.65 L944.3 235.44 L945.3 235.90 L946.3 236.01 L947.3 235.79 L948.3 235.22 L949.3 234.32 L950.3 233.08 L951.3 231.52 L952.3 229.63 L953.3 227.42 L954.3 224.90 L955.3 222.08 L956.3 218.97 L957.3 215.58 L958.3 211.92 L959.3 208.00 L960.3 203.84 L961.3 199.45 L962.3 194.85 L963.3 190.05 L964.3 185.08 L965.3 179.93 L966.3 174.65 L967.3 169.23 L968.3 163.71 L969.3 158.10 L970.3 152.42 L971.3 146.69 L972.3 140.93 L973.3 135.16 L974.3 129.40 L975.3 123.67 L976.3 117.99 L977.3 112.38 L978.3 106.86 L979.3 101.45 L980.3 96.16 L981.3 91.02 L982.3 86.05 L983.3 81.25 L984.3 76.66 L985.3 72.27 L986.3 68.12 L987.3 64.20 L988.3 60.55 L989.3 57.16 L990.3 54.06 L991.3 51.24 L992.3 48.73 L993.3 46.53 L994.3 44.65 L995.3 43.09 L996.3 41.86 L997.3 40.96 L998.3 40.41 L999.3 40.19 L1000.3 40.31 L1001.3 40.77 L1002.3 41.57 L1003.3 42.70 L1004.3 44.17 L1005.3 45.96 L1006.3 48.07 L1007.3 50.50 L1008.3 53.22 L1009.3 56.25 L1010.3 59.56 L1011.3 63.14 L1012.3 66.98 L1013.3 71.06 L1014.3 75.38 L1015.3 79.92 L1016.3 84.66 L1017.3 89.59 L1018.3 94.68 L1019.3 99.93 L1020.3 105.30 L1021.3 110.80 L1022.3 116.38 L1023.3 122.04 L1024.3 127.76 L1025.3 133.51 L1026.3 139.28 L1027.3 145.05 L1028.3 150.79 L1029.3 156.49 L1030.3 162.12 L1031.3 167.67 L1032.3 173.12 L1033.3 178.44 L1034.3 183.63 L1035.3 188.65 L1036.3 193.50 L1037.3 198.16 L1038.3 202.61 L1039.3 206.84 L1040.3 210.83 L1041.3 214.56 L1042.3 218.03 L1043.3 221.23 L1044.3 224.13 L1045.3 226.73 L1046.3 229.03 L1047.3 231.01 L1048.3 232.67 L1049.3 234.00 L1050.3 235.00 L1051.3 235.66 L1052.3 235.98 L1053.3 235.96 L1054.3 235.61 L1055.3 234.91 L1056.3 233.88 L1057.3 232.51 L1058.3 230.82 L1059.3 228.81 L1060.3 226.48 L1061.3 223.84 L1062.3 220.90 L1063.3 217.68 L1064.3 214.18 L1065.3 210.42 L1066.3 206.41 L1067.3 202.16 L1068.3 197.68 L1069.3 193.00 L1070.3 188.13 L1071.3 183.09 L1072.3 177.89 L1073.3 172.55 L1074.3 167.09 L1075.3 161.53 L1076.3 155.89 L1077.3 150.19 L1078.3 144.44 L1079.3 138.68 L1079.4 138.10" stroke="#960000" stroke-width="1.05" fill="none"/>
<path d="M13.3 138.10 L14.3 144.41 L15.3 150.70 L16.3 156.94 L17.3 163.12 L18.3 169.21 L19.3 175.20 L20.3 181.05 L21.3 186.76 L22.3 192.29 L23.3 197.64 L24.3 202.78 L25.3 207.70 L26.3 212.38 L27.3 216.79 L28.3 220.94 L29.3 224.79 L30.3 228.35 L31.3 231.59 L32.3 234.51 L33.3 237.09 L34.3 239.33 L35.3 241.22 L36.3 242.75 L37.3 243.91 L38.3 244.71 L39.3 245.14 L40.3 245.20 L41.3 244.88 L42.3 244.20 L43.3 243.14 L44.3 241.72 L45.3 239.94 L46.3 237.81 L47.3 235.33 L48.3 232.52 L49.3 229.37 L50.3 225.91 L51.3 222.14 L52.3 218.09 L53.3 213.75 L54.3 209.15 L55.3 204.31 L56.3 199.23 L57.3 193.94 L58.3 188.46 L59.3 182.81 L60.3 177.00 L61.3 171.05 L62.3 164.99 L63.3 158.83 L64.3 152.61 L65.3 146.33 L66.3 140.03 L67.3 133.71 L68.3 127.42 L69.3 121.16 L70.3 114.96 L71.3 108.84 L72.3 102.82 L73.3 96.92 L74.3 91.17 L75.3 85.58 L76.3 80.17 L77.3 74.96 L78.3 69.97 L79.3 65.22 L80.3 60.73 L81.3 56.50 L82.3 52.55 L83.3 48.90 L84.3 45.56 L85.3 42.55 L86.3 39.86 L87.3 37.51 L88.3 35.52 L89.3 33.88 L90.3 32.60 L91.3 31.69 L92.3 31.15 L93.3 30.98 L94.3 31.18 L95.3 31.75 L96.3 32.70 L97.3 34.01 L98.3 35.67 L99.3 37.70 L100.3 40.07 L101.3 42.79 L102.3 45.83 L103.3 49.20 L104.3 52.87 L105.3 56.85 L106.3 61.10 L107.3 65.62 L108.3 70.39 L109.3 75.40 L110.3 80.62 L111.3 86.05 L112.3 91.65 L113.3 97.42 L114.3 103.32 L115.3 109.35 L116.3 115.48 L117.3 121.69 L118.3 127.95 L119.3 134.25 L120.3 140.56 L121.3 146.87 L122.3 153.14 L123.3 159.36 L124.3 165.51 L125.3 171.56 L126.3 177.50 L127.3 183.29 L128.3 188.94 L129.3 194.40 L130.3 199.67 L131.3 204.73 L132.3 209.55 L133.3 214.13 L134.3 218.44 L135.3 222.48 L136.3 226.22 L137.3 229.65 L138.3 232.77 L139.3 235.56 L140.3 238.01 L141.3 240.11 L142.3 241.86 L143.3 243.25 L144.3 244.27 L145.3 244.92 L146.3 245.21 L147.3 245.12 L148.3 244.66 L149.3 243.83 L150.3 242.63 L151.3 241.07 L152.3 239.15 L153.3 236.89 L154.3 234.27 L155.3 231.33 L156.3 228.06 L157.3 224.48 L158.3 220.60 L159.3 216.43 L160.3 211.99 L161.3 207.29 L162.3 202.35 L163.3 197.19 L164.3 191.83 L165.3 186.28 L166.3 180.56 L167.3 174.69 L168.3 168.70 L169.3 162.60 L170.3 156.41 L171.3 150.16 L172.3 143.87 L173.3 137.56 L174.3 131.25 L175.3 124.97 L176.3 118.73 L177.3 112.56 L178.3 106.48 L179.3 100.50 L180.3 94.66 L181.3 88.97 L182.3 83.45 L183.3 78.11 L184.3 72.99 L185.3 68.09 L186.3 63.44 L187.3 59.04 L188.3 54.92 L189.3 51.09 L190.3 47.56 L191.3 44.35 L192.3 41.46 L193.3 38.90 L194.3 36.69 L195.3 34.84 L196.3 33.34 L197.3 32.20 L198.3 31.44 L199.3 31.04 L200.3 31.01 L201.3 31.36 L202.3 32.08 L203.3 33.16 L204.3 34.61 L205.3 36.42 L206.3 38.59 L207.3 41.09 L208.3 43.94 L209.3 47.11 L210.3 50.60 L211.3 54.39 L212.3 58.47 L213.3 62.83 L214.3 67.45 L215.3 72.32 L216.3 77.41 L217.3 82.71 L218.3 88.21 L219.3 93.88 L220.3 99.70 L221.3 105.66 L222.3 111.73 L223.3 117.89 L224.3 124.12 L225.3 130.40 L226.3 136.71 L227.3 143.02 L228.3 149.32 L229.3 155.57 L230.3 161.77 L231.3 167.88 L232.3 173.89 L233.3 179.77 L234.3 185.51 L235.3 191.09 L236.3 196.48 L237.3 201.67 L238.3 206.64 L239.3 211.37 L240.3 215.84 L241.3 220.05 L242.3 223.97 L243.3 227.59 L244.3 230.91 L245.3 233.90 L246.3 236.55 L247.3 238.87 L248.3 240.83 L249.3 242.44 L250.3 243.69 L251.3 244.57 L252.3 245.08 L253.3 245.22 L254.3 244.98 L255.3 244.38 L256.3 243.41 L257.3 242.07 L258.3 240.37 L259.3 238.31 L260.3 235.91 L261.3 233.16 L262.3 230.09 L263.3 226.70 L264.3 223.00 L265.3 219.00 L266.3 214.73 L267.3 210.19 L268.3 205.39 L269.3 200.37 L270.3 195.13 L271.3 189.68 L272.3 184.07 L273.3 178.29 L274.3 172.37 L275.3 166.33 L276.3 160.19 L277.3 153.98 L278.3 147.71 L279.3 141.41 L280.3 135.10 L281.3 128.80 L282.3 122.53 L283.3 116.31 L284.3 110.17 L285.3 104.13 L286.3 98.21 L287.3 92.42 L288.3 86.79 L289.3 81.34 L290.3 76.09 L291.3 71.05 L292.3 66.25 L293.3 61.69 L294.3 57.40 L295.3 53.39 L296.3 49.68 L297.3 46.27 L298.3 43.18 L299.3 40.42 L300.3 38.00 L301.3 35.93 L302.3 34.21 L303.3 32.85 L304.3 31.86 L305.3 31.24 L306.3 30.99 L307.3 31.10 L308.3 31.60 L309.3 32.46 L310.3 33.69 L311.3 35.28 L312.3 37.22 L313.3 39.52 L314.3 42.16 L315.3 45.14 L316.3 48.43 L317.3 52.04 L318.3 55.95 L319.3 60.14 L320.3 64.60 L321.3 69.32 L322.3 74.28 L323.3 79.45 L324.3 84.84 L325.3 90.40 L326.3 96.14 L327.3 102.01 L328.3 108.02 L329.3 114.12 L330.3 120.32 L331.3 126.57 L332.3 132.86 L333.3 139.17 L334.3 145.48 L335.3 151.76 L336.3 158.00 L337.3 164.16 L338.3 170.24 L339.3 176.20 L340.3 182.03 L341.3 187.71 L342.3 193.22 L343.3 198.53 L344.3 203.64 L345.3 208.51 L346.3 213.15 L347.3 217.52 L348.3 221.61 L349.3 225.42 L350.3 228.92 L351.3 232.11 L352.3 234.97 L353.3 237.50 L354.3 239.68 L355.3 241.50 L356.3 242.97 L357.3 244.08 L358.3 244.81 L359.3 245.18 L360.3 245.17 L361.3 244.79 L362.3 244.04 L363.3 242.93 L364.3 241.45 L365.3 239.61 L366.3 237.41 L367.3 234.88 L368.3 232.01 L369.3 228.81 L370.3 225.29 L371.3 221.48 L372.3 217.37 L373.3 212.99 L374.3 208.35 L375.3 203.46 L376.3 198.35 L377.3 193.03 L378.3 187.51 L379.3 181.83 L380.3 175.99 L381.3 170.03 L382.3 163.95 L383.3 157.78 L384.3 151.54 L385.3 145.26 L386.3 138.95 L387.3 132.64 L388.3 126.35 L389.3 120.10 L390.3 113.91 L391.3 107.80 L392.3 101.81 L393.3 95.93 L394.3 90.21 L395.3 84.64 L396.3 79.27 L397.3 74.10 L398.3 69.15 L399.3 64.44 L400.3 59.99 L401.3 55.81 L402.3 51.91 L403.3 48.31 L404.3 45.03 L405.3 42.06 L406.3 39.44 L407.3 37.15 L408.3 35.22 L409.3 33.64 L410.3 32.42 L411.3 31.57 L412.3 31.09 L413.3 30.99 L414.3 31.25 L415.3 31.89 L416.3 32.89 L417.3 34.26 L418.3 35.99 L419.3 38.08 L420.3 40.51 L421.3 43.28 L422.3 46.38 L423.3 49.80 L424.3 53.53 L425.3 57.55 L426.3 61.85 L427.3 66.41 L428.3 71.22 L429.3 76.27 L430.3 81.53 L431.3 86.99 L432.3 92.62 L433.3 98.41 L434.3 104.34 L435.3 110.39 L436.3 116.53 L437.3 122.75 L438.3 129.02 L439.3 135.32 L440.3 141.63 L441.3 147.93 L442.3 154.20 L443.3 160.41 L444.3 166.54 L445.3 172.58 L446.3 178.49 L447.3 184.26 L448.3 189.88 L449.3 195.31 L450.3 200.55 L451.3 205.57 L452.3 210.35 L453.3 214.88 L454.3 219.15 L455.3 223.13 L456.3 226.82 L457.3 230.20 L458.3 233.27 L459.3 236.00 L460.3 238.39 L461.3 240.43 L462.3 242.12 L463.3 243.45 L464.3 244.41 L465.3 245.00 L466.3 245.22 L467.3 245.07 L468.3 244.54 L469.3 243.65 L470.3 242.39 L471.3 240.77 L472.3 238.79 L473.3 236.47 L474.3 233.80 L475.3 230.80 L476.3 227.47 L477.3 223.84 L478.3 219.91 L479.3 215.69 L480.3 211.21 L481.3 206.47 L482.3 201.49 L483.3 196.30 L484.3 190.90 L485.3 185.32 L486.3 179.57 L487.3 173.68 L488.3 167.67 L489.3 161.55 L490.3 155.35 L491.3 149.10 L492.3 142.80 L493.3 136.49 L494.3 130.18 L495.3 123.91 L496.3 117.68 L497.3 111.52 L498.3 105.45 L499.3 99.50 L500.3 93.68 L501.3 88.02 L502.3 82.53 L503.3 77.23 L504.3 72.14 L505.3 67.28 L506.3 62.67 L507.3 58.32 L508.3 54.25 L509.3 50.47 L510.3 46.99 L511.3 43.83 L512.3 41.00 L513.3 38.50 L514.3 36.35 L515.3 34.56 L516.3 33.12 L517.3 32.05 L518.3 31.34 L519.3 31.01 L520.3 31.05 L521.3 31.46 L522.3 32.24 L523.3 33.38 L524.3 34.90 L525.3 36.77 L526.3 38.99 L527.3 41.55 L528.3 44.45 L529.3 47.68 L530.3 51.22 L531.3 55.06 L532.3 59.19 L533.3 63.60 L534.3 68.26 L535.3 73.17 L536.3 78.30 L537.3 83.64 L538.3 89.16 L539.3 94.86 L540.3 100.71 L541.3 106.69 L542.3 112.77 L543.3 118.95 L544.3 125.19 L545.3 131.48 L546.3 137.78 L547.3 144.09 L548.3 150.38 L549.3 156.63 L550.3 162.81 L551.3 168.91 L552.3 174.90 L553.3 180.76 L554.3 186.47 L555.3 192.02 L556.3 197.38 L557.3 202.53 L558.3 207.46 L559.3 212.15 L560.3 216.58 L561.3 220.74 L562.3 224.61 L563.3 228.18 L564.3 231.44 L565.3 234.37 L566.3 236.97 L567.3 239.23 L568.3 241.13 L569.3 242.68 L570.3 243.86 L571.3 244.68 L572.3 245.13 L573.3 245.20 L574.3 244.91 L575.3 244.24 L576.3 243.20 L577.3 241.80 L578.3 240.04 L579.3 237.93 L580.3 235.47 L581.3 232.67 L582.3 229.54 L583.3 226.09 L584.3 222.34 L585.3 218.30 L586.3 213.97 L587.3 209.39 L588.3 204.56 L589.3 199.49 L590.3 194.21 L591.3 188.74 L592.3 183.09 L593.3 177.29 L594.3 171.35 L595.3 165.29 L596.3 159.14 L597.3 152.92 L598.3 146.65 L599.3 140.34 L600.3 134.03 L601.3 127.73 L602.3 121.47 L603.3 115.26 L604.3 109.14 L605.3 103.12 L606.3 97.21 L607.3 91.45 L608.3 85.85 L609.3 80.43 L610.3 75.22 L611.3 70.22 L612.3 65.46 L613.3 60.94 L614.3 56.70 L615.3 52.74 L616.3 49.08 L617.3 45.72 L618.3 42.69 L619.3 39.99 L620.3 37.62 L621.3 35.61 L622.3 33.95 L623.3 32.66 L624.3 31.73 L625.3 31.17 L626.3 30.98 L627.3 31.16 L628.3 31.72 L629.3 32.64 L630.3 33.93 L631.3 35.58 L632.3 37.59 L633.3 39.95 L634.3 42.65 L635.3 45.67 L636.3 49.02 L637.3 52.68 L638.3 56.64 L639.3 60.88 L640.3 65.39 L641.3 70.15 L642.3 75.14 L643.3 80.36 L644.3 85.77 L645.3 91.37 L646.3 97.12 L647.3 103.03 L648.3 109.05 L649.3 115.17 L650.3 121.38 L651.3 127.64 L652.3 133.93 L653.3 140.25 L654.3 146.55 L655.3 152.83 L656.3 159.05 L657.3 165.20 L658.3 171.26 L659.3 177.20 L660.3 183.01 L661.3 188.66 L662.3 194.13 L663.3 199.41 L664.3 204.48 L665.3 209.32 L666.3 213.91 L667.3 218.23 L668.3 222.28 L669.3 226.04 L670.3 229.49 L671.3 232.62 L672.3 235.43 L673.3 237.89 L674.3 240.01 L675.3 241.78 L676.3 243.19 L677.3 244.23 L678.3 244.90 L679.3 245.20 L680.3 245.13 L681.3 244.69 L682.3 243.88 L683.3 242.70 L684.3 241.16 L685.3 239.26 L686.3 237.01 L687.3 234.41 L688.3 231.48 L689.3 228.23 L690.3 224.66 L691.3 220.80 L692.3 216.64 L693.3 212.22 L694.3 207.53 L695.3 202.61 L696.3 197.46 L697.3 192.10 L698.3 186.56 L699.3 180.85 L700.3 174.99 L701.3 169.00 L702.3 162.91 L703.3 156.72 L704.3 150.48 L705.3 144.19 L706.3 137.88 L707.3 131.57 L708.3 125.28 L709.3 119.04 L710.3 112.87 L711.3 106.78 L712.3 100.80 L713.3 94.95 L714.3 89.25 L715.3 83.72 L716.3 78.38 L717.3 73.24 L718.3 68.33 L719.3 63.67 L720.3 59.26 L721.3 55.12 L722.3 51.28 L723.3 47.73 L724.3 44.50 L725.3 41.59 L726.3 39.02 L727.3 36.80 L728.3 34.92 L729.3 33.40 L730.3 32.25 L731.3 31.47 L732.3 31.05 L733.3 31.01 L734.3 31.33 L735.3 32.03 L736.3 33.10 L737.3 34.53 L738.3 36.32 L739.3 38.47 L740.3 40.96 L741.3 43.79 L742.3 46.94 L743.3 50.42 L744.3 54.19 L745.3 58.26 L746.3 62.61 L747.3 67.21 L748.3 72.07 L749.3 77.15 L750.3 82.44 L751.3 87.93 L752.3 93.59 L753.3 99.41 L754.3 105.36 L755.3 111.43 L756.3 117.58 L757.3 123.81 L758.3 130.09 L759.3 136.40 L760.3 142.71 L761.3 149.00 L762.3 155.26 L763.3 161.46 L764.3 167.58 L765.3 173.59 L766.3 179.48 L767.3 185.23 L768.3 190.82 L769.3 196.22 L770.3 201.42 L771.3 206.40 L772.3 211.14 L773.3 215.63 L774.3 219.85 L775.3 223.78 L776.3 227.42 L777.3 230.75 L778.3 233.75 L779.3 236.43 L780.3 238.76 L781.3 240.74 L782.3 242.37 L783.3 243.64 L784.3 244.53 L785.3 245.06 L786.3 245.22 L787.3 245.00 L788.3 244.42 L789.3 243.46 L790.3 242.14 L791.3 240.46 L792.3 238.42 L793.3 236.04 L794.3 233.31 L795.3 230.25 L796.3 226.88 L797.3 223.19 L798.3 219.21 L799.3 214.95 L800.3 210.42 L801.3 205.64 L802.3 200.62 L803.3 195.39 L804.3 189.96 L805.3 184.35 L806.3 178.58 L807.3 172.67 L808.3 166.63 L809.3 160.50 L810.3 154.29 L811.3 148.03 L812.3 141.73 L813.3 135.42 L814.3 129.11 L815.3 122.84 L816.3 116.62 L817.3 110.48 L818.3 104.43 L819.3 98.50 L820.3 92.71 L821.3 87.07 L822.3 81.61 L823.3 76.35 L824.3 71.30 L825.3 66.48 L826.3 61.91 L827.3 57.61 L828.3 53.59 L829.3 49.86 L830.3 46.43 L831.3 43.33 L832.3 40.55 L833.3 38.11 L834.3 36.02 L835.3 34.29 L836.3 32.91 L837.3 31.90 L838.3 31.26 L839.3 30.99 L840.3 31.09 L841.3 31.56 L842.3 32.41 L843.3 33.62 L844.3 35.19 L845.3 37.12 L846.3 39.40 L847.3 42.02 L848.3 44.98 L849.3 48.26 L850.3 51.85 L851.3 55.74 L852.3 59.92 L853.3 64.37 L854.3 69.08 L855.3 74.02 L856.3 79.19 L857.3 84.56 L858.3 90.12 L859.3 95.85 L860.3 101.72 L861.3 107.71 L862.3 113.82 L863.3 120.00 L864.3 126.26 L865.3 132.55 L866.3 138.86 L867.3 145.17 L868.3 151.45 L869.3 157.69 L870.3 163.86 L871.3 169.94 L872.3 175.91 L873.3 181.74 L874.3 187.43 L875.3 192.94 L876.3 198.27 L877.3 203.39 L878.3 208.27 L879.3 212.92 L880.3 217.31 L881.3 221.42 L882.3 225.24 L883.3 228.76 L884.3 231.96 L885.3 234.84 L886.3 237.38 L887.3 239.58 L888.3 241.42 L889.3 242.91 L890.3 244.03 L891.3 244.78 L892.3 245.17 L893.3 245.18 L894.3 244.82 L895.3 244.09 L896.3 242.99 L897.3 241.53 L898.3 239.71 L899.3 237.53 L900.3 235.01 L901.3 232.16 L902.3 228.97 L903.3 225.47 L904.3 221.67 L905.3 217.58 L906.3 213.21 L907.3 208.58 L908.3 203.71 L909.3 198.61 L910.3 193.30 L911.3 187.79 L912.3 182.12 L913.3 176.29 L914.3 170.33 L915.3 164.25 L916.3 158.09 L917.3 151.86 L918.3 145.58 L919.3 139.27 L920.3 132.96 L921.3 126.66 L922.3 120.41 L923.3 114.22 L924.3 108.11 L925.3 102.10 L926.3 96.22 L927.3 90.49 L928.3 84.92 L929.3 79.53 L930.3 74.35 L931.3 69.39 L932.3 64.67 L933.3 60.20 L934.3 56.01 L935.3 52.10 L936.3 48.48 L937.3 45.18 L938.3 42.21 L939.3 39.56 L940.3 37.26 L941.3 35.30 L942.3 33.71 L943.3 32.47 L944.3 31.61 L945.3 31.11 L946.3 30.98 L947.3 31.23 L948.3 31.85 L949.3 32.83 L950.3 34.19 L951.3 35.90 L952.3 37.97 L953.3 40.38 L954.3 43.14 L955.3 46.22 L956.3 49.63 L957.3 53.34 L958.3 57.34 L959.3 61.63 L960.3 66.18 L961.3 70.98 L962.3 76.01 L963.3 81.26 L964.3 86.71 L965.3 92.33 L966.3 98.12 L967.3 104.04 L968.3 110.08 L969.3 116.22 L970.3 122.44 L971.3 128.71 L972.3 135.01 L973.3 141.32 L974.3 147.62 L975.3 153.89 L976.3 160.10 L977.3 166.24 L978.3 172.28 L979.3 178.20 L980.3 183.98 L981.3 189.60 L982.3 195.04 L983.3 200.29 L984.3 205.32 L985.3 210.12 L986.3 214.66 L987.3 218.94 L988.3 222.94 L989.3 226.65 L990.3 230.04 L991.3 233.12 L992.3 235.87 L993.3 238.28 L994.3 240.34 L995.3 242.04 L996.3 243.39 L997.3 244.37 L998.3 244.98 L999.3 245.22 L1000.3 245.08 L1001.3 244.58 L1002.3 243.71 L1003.3 242.46 L1004.3 240.86 L1005.3 238.90 L1006.3 236.59 L1007.3 233.94 L1008.3 230.95 L1009.3 227.65 L1010.3 224.03 L1011.3 220.11 L1012.3 215.91 L1013.3 211.44 L1014.3 206.71 L1015.3 201.75 L1016.3 196.56 L1017.3 191.17 L1018.3 185.60 L1019.3 179.86 L1020.3 173.98 L1021.3 167.97 L1022.3 161.86 L1023.3 155.67 L1024.3 149.41 L1025.3 143.12 L1026.3 136.81 L1027.3 130.50 L1028.3 124.22 L1029.3 117.99 L1030.3 111.82 L1031.3 105.75 L1032.3 99.79 L1033.3 93.97 L1034.3 88.29 L1035.3 82.80 L1036.3 77.49 L1037.3 72.39 L1038.3 67.52 L1039.3 62.90 L1040.3 58.53 L1041.3 54.45 L1042.3 50.65 L1043.3 47.16 L1044.3 43.98 L1045.3 41.13 L1046.3 38.62 L1047.3 36.45 L1048.3 34.64 L1049.3 33.18 L1050.3 32.09 L1051.3 31.37 L1052.3 31.02 L1053.3 31.04 L1054.3 31.43 L1055.3 32.19 L1056.3 33.32 L1057.3 34.81 L1058.3 36.66 L1059.3 38.87 L1060.3 41.42 L1061.3 44.30 L1062.3 47.51 L1063.3 51.04 L1064.3 54.86 L1065.3 58.98 L1066.3 63.37 L1067.3 68.02 L1068.3 72.92 L1069.3 78.04 L1070.3 83.36 L1071.3 88.88 L1072.3 94.57 L1073.3 100.41 L1074.3 106.38 L1075.3 112.47 L1076.3 118.64 L1077.3 124.88 L1078.3 131.16 L1079.3 137.47 L1079.4 138.10" stroke="#008e00" stroke-width="1.05" fill="none"/>
</g>
<rect x="0" y="266.5" width="1080" height="3.6" fill="#eaf0f6"/>
<rect x="0" y="270.1" width="1080" height="1.8" fill="#9ea4ac"/>
<rect x="0" y="271.9" width="1080" height="11.8" fill="url(#tb2)"/>
<path d="M6.5 276 Q3 279 6.5 282.5" stroke="#1a30e0" stroke-width="1.6" fill="none"/>
<text x="9.7" y="281.8" textLength="49" lengthAdjust="spacingAndGlyphs" style="font-size:6.9px;fill:#2a2e36">DCU100_FRONT.asc</text>
<rect x="1043.4" y="275.2" width="13.4" height="7.4" rx="1" fill="url(#bt)" stroke="#8a9ab0" stroke-width="0.6"/>
<rect x="1058" y="275.2" width="13.4" height="7.4" rx="1" fill="url(#bt)" stroke="#8a9ab0" stroke-width="0.6"/>
<rect x="1047.6" y="278.3" width="5" height="1.6" rx="0.8" fill="#e8ecf0" stroke="#707880" stroke-width="0.4"/>
<rect x="1062.3" y="277.2" width="4.6" height="3.6" fill="#e8ecf0" stroke="#707880" stroke-width="0.8"/>
<linearGradient id="cl" x1="0" y1="0" x2="0" y2="1"><stop offset="0" stop-color="#e8a090"/><stop offset="0.5" stop-color="#c84830"/><stop offset="1" stop-color="#e07050"/></linearGradient>
<rect x="1072.6" y="275.2" width="10" height="7.4" rx="1" fill="url(#cl)" stroke="#8a4848" stroke-width="0.6"/><path d="M1076.5 277.3 L1079.5 280.6 M1079.5 277.3 L1076.5 280.6" stroke="#fff" stroke-width="1"/>
<rect x="0" y="283.7" width="1080" height="1" fill="#a8a8a8"/>
<rect x="0" y="284.7" width="1080" height="240.3" fill="#c3c3c3"/>
<mask id="rowm" maskUnits="userSpaceOnUse" x="0" y="284" width="1080" height="241"><g fill="#fff"><rect x="0" y="287" width="1080" height="1" fill-opacity="1.00"/><rect x="0" y="292" width="1080" height="1" fill-opacity="0.53"/><rect x="0" y="293" width="1080" height="1" fill-opacity="0.47"/><rect x="0" y="298" width="1080" height="1" fill-opacity="1.00"/><rect x="0" y="304" width="1080" height="1" fill-opacity="1.00"/><rect x="0" y="309" width="1080" height="1" fill-opacity="0.67"/><rect x="0" y="310" width="1080" height="1" fill-opacity="0.33"/><rect x="0" y="315" width="1080" height="1" fill-opacity="1.00"/><rect x="0" y="320" width="1080" height="1" fill-opacity="0.09"/><rect x="0" y="321" width="1080" height="1" fill-opacity="0.91"/><rect x="0" y="326" width="1080" height="1" fill-opacity="0.80"/><rect x="0" y="327" width="1080" height="1" fill-opacity="0.20"/><rect x="0" y="332" width="1080" height="1" fill-opacity="1.00"/><rect x="0" y="337" width="1080" height="1" fill-opacity="0.22"/><rect x="0" y="338" width="1080" height="1" fill-opacity="0.78"/><rect x="0" y="343" width="1080" height="1" fill-opacity="0.93"/><rect x="0" y="344" width="1080" height="1" fill-opacity="0.07"/><rect x="0" y="349" width="1080" height="1" fill-opacity="1.00"/><rect x="0" y="354" width="1080" height="1" fill-opacity="0.35"/><rect x="0" y="355" width="1080" height="1" fill-opacity="0.65"/><rect x="0" y="360" width="1080" height="1" fill-opacity="1.00"/><rect x="0" y="366" width="1080" height="1" fill-opacity="1.00"/><rect x="0" y="371" width="1080" height="1" fill-opacity="0.49"/><rect x="0" y="372" width="1080" height="1" fill-opacity="0.51"/><rect x="0" y="377" width="1080" height="1" fill-opacity="1.00"/><rect x="0" y="383" width="1080" height="1" fill-opacity="1.00"/><rect x="0" y="388" width="1080" height="1" fill-opacity="0.62"/><rect x="0" y="389" width="1080" height="1" fill-opacity="0.38"/><rect x="0" y="394" width="1080" height="1" fill-opacity="1.00"/><rect x="0" y="399" width="1080" height="1" fill-opacity="0.04"/><rect x="0" y="400" width="1080" height="1" fill-opacity="0.96"/><rect x="0" y="405" width="1080" height="1" fill-opacity="0.75"/><rect x="0" y="406" width="1080" height="1" fill-opacity="0.25"/><rect x="0" y="411" width="1080" height="1" fill-opacity="1.00"/><rect x="0" y="416" width="1080" height="1" fill-opacity="0.18"/><rect x="0" y="417" width="1080" height="1" fill-opacity="0.82"/><rect x="0" y="422" width="1080" height="1" fill-opacity="0.89"/><rect x="0" y="423" width="1080" height="1" fill-opacity="0.11"/><rect x="0" y="428" width="1080" height="1" fill-opacity="1.00"/><rect x="0" y="433" width="1080" height="1" fill-opacity="0.31"/><rect x="0" y="434" width="1080" height="1" fill-opacity="0.69"/><rect x="0" y="439" width="1080" height="1" fill-opacity="1.00"/><rect x="0" y="445" width="1080" height="1" fill-opacity="1.00"/><rect x="0" y="450" width="1080" height="1" fill-opacity="0.44"/><rect x="0" y="451" width="1080" height="1" fill-opacity="0.56"/><rect x="0" y="456" width="1080" height="1" fill-opacity="1.00"/><rect x="0" y="462" width="1080" height="1" fill-opacity="1.00"/><rect x="0" y="467" width="1080" height="1" fill-opacity="0.57"/><rect x="0" y="468" width="1080" height="1" fill-opacity="0.43"/><rect x="0" y="473" width="1080" height="1" fill-opacity="1.00"/><rect x="0" y="479" width="1080" height="1" fill-opacity="1.00"/><rect x="0" y="484" width="1080" height="1" fill-opacity="0.71"/><rect x="0" y="485" width="1080" height="1" fill-opacity="0.29"/><rect x="0" y="490" width="1080" height="1" fill-opacity="1.00"/><rect x="0" y="495" width="1080" height="1" fill-opacity="0.13"/><rect x="0" y="496" width="1080" height="1" fill-opacity="0.87"/><rect x="0" y="501" width="1080" height="1" fill-opacity="0.84"/><rect x="0" y="502" width="1080" height="1" fill-opacity="0.16"/><rect x="0" y="507" width="1080" height="1" fill-opacity="1.00"/><rect x="0" y="512" width="1080" height="1" fill-opacity="0.26"/><rect x="0" y="513" width="1080" height="1" fill-opacity="0.74"/><rect x="0" y="518" width="1080" height="1" fill-opacity="0.97"/><rect x="0" y="524" width="1080" height="1" fill-opacity="1.00"/></g></mask>
<g mask="url(#rowm)"><g fill="#000" opacity="0.40"><rect x="1" y="284.7" width="1" height="240.3" fill-opacity="0.74"/><rect x="2" y="284.7" width="1" height="240.3" fill-opacity="0.26"/><rect x="6" y="284.7" width="1" height="240.3" fill-opacity="0.08"/><rect x="7" y="284.7" width="1" height="240.3" fill-opacity="0.92"/><rect x="12" y="284.7" width="1" height="240.3" fill-opacity="0.42"/><rect x="13" y="284.7" width="1" height="240.3" fill-opacity="0.58"/><rect x="18" y="284.7" width="1" height="240.3" fill-opacity="0.76"/><rect x="19" y="284.7" width="1" height="240.3" fill-opacity="0.24"/><rect x="23" y="284.7" width="1" height="240.3" fill-opacity="0.11"/><rect x="24" y="284.7" width="1" height="240.3" fill-opacity="0.89"/><rect x="29" y="284.7" width="1" height="240.3" fill-opacity="0.45"/><rect x="30" y="284.7" width="1" height="240.3" fill-opacity="0.55"/><rect x="35" y="284.7" width="1" height="240.3" fill-opacity="0.79"/><rect x="36" y="284.7" width="1" height="240.3" fill-opacity="0.21"/><rect x="40" y="284.7" width="1" height="240.3" fill-opacity="0.13"/><rect x="41" y="284.7" width="1" height="240.3" fill-opacity="0.87"/><rect x="46" y="284.7" width="1" height="240.3" fill-opacity="0.48"/><rect x="47" y="284.7" width="1" height="240.3" fill-opacity="0.52"/><rect x="52" y="284.7" width="1" height="240.3" fill-opacity="0.82"/><rect x="53" y="284.7" width="1" height="240.3" fill-opacity="0.18"/><rect x="57" y="284.7" width="1" height="240.3" fill-opacity="0.16"/><rect x="58" y="284.7" width="1" height="240.3" fill-opacity="0.84"/><rect x="63" y="284.7" width="1" height="240.3" fill-opacity="0.50"/><rect x="64" y="284.7" width="1" height="240.3" fill-opacity="0.50"/><rect x="69" y="284.7" width="1" height="240.3" fill-opacity="0.84"/><rect x="70" y="284.7" width="1" height="240.3" fill-opacity="0.16"/><rect x="74" y="284.7" width="1" height="240.3" fill-opacity="0.19"/><rect x="75" y="284.7" width="1" height="240.3" fill-opacity="0.81"/><rect x="80" y="284.7" width="1" height="240.3" fill-opacity="0.53"/><rect x="81" y="284.7" width="1" height="240.3" fill-opacity="0.47"/><rect x="86" y="284.7" width="1" height="240.3" fill-opacity="0.87"/><rect x="87" y="284.7" width="1" height="240.3" fill-opacity="0.13"/><rect x="91" y="284.7" width="1" height="240.3" fill-opacity="0.22"/><rect x="92" y="284.7" width="1" height="240.3" fill-opacity="0.78"/><rect x="97" y="284.7" width="1" height="240.3" fill-opacity="0.56"/><rect x="98" y="284.7" width="1" height="240.3" fill-opacity="0.44"/><rect x="103" y="284.7" width="1" height="240.3" fill-opacity="0.90"/><rect x="104" y="284.7" width="1" height="240.3" fill-opacity="0.10"/><rect x="108" y="284.7" width="1" height="240.3" fill-opacity="0.24"/><rect x="109" y="284.7" width="1" height="240.3" fill-opacity="0.76"/><rect x="114" y="284.7" width="1" height="240.3" fill-opacity="0.59"/><rect x="115" y="284.7" width="1" height="240.3" fill-opacity="0.41"/><rect x="120" y="284.7" width="1" height="240.3" fill-opacity="0.93"/><rect x="121" y="284.7" width="1" height="240.3" fill-opacity="0.07"/><rect x="125" y="284.7" width="1" height="240.3" fill-opacity="0.27"/><rect x="126" y="284.7" width="1" height="240.3" fill-opacity="0.73"/><rect x="131" y="284.7" width="1" height="240.3" fill-opacity="0.61"/><rect x="132" y="284.7" width="1" height="240.3" fill-opacity="0.39"/><rect x="137" y="284.7" width="1" height="240.3" fill-opacity="0.96"/><rect x="138" y="284.7" width="1" height="240.3" fill-opacity="0.04"/><rect x="142" y="284.7" width="1" height="240.3" fill-opacity="0.30"/><rect x="143" y="284.7" width="1" height="240.3" fill-opacity="0.70"/><rect x="148" y="284.7" width="1" height="240.3" fill-opacity="0.64"/><rect x="149" y="284.7" width="1" height="240.3" fill-opacity="0.36"/><rect x="154" y="284.7" width="1" height="240.3" fill-opacity="0.98"/><rect x="159" y="284.7" width="1" height="240.3" fill-opacity="0.33"/><rect x="160" y="284.7" width="1" height="240.3" fill-opacity="0.67"/><rect x="165" y="284.7" width="1" height="240.3" fill-opacity="0.67"/><rect x="166" y="284.7" width="1" height="240.3" fill-opacity="0.33"/><rect x="171" y="284.7" width="1" height="240.3" fill-opacity="0.99"/><rect x="176" y="284.7" width="1" height="240.3" fill-opacity="0.35"/><rect x="177" y="284.7" width="1" height="240.3" fill-opacity="0.65"/><rect x="182" y="284.7" width="1" height="240.3" fill-opacity="0.70"/><rect x="183" y="284.7" width="1" height="240.3" fill-opacity="0.30"/><rect x="188" y="284.7" width="1" height="240.3" fill-opacity="0.96"/><rect x="193" y="284.7" width="1" height="240.3" fill-opacity="0.38"/><rect x="194" y="284.7" width="1" height="240.3" fill-opacity="0.62"/><rect x="199" y="284.7" width="1" height="240.3" fill-opacity="0.72"/><rect x="200" y="284.7" width="1" height="240.3" fill-opacity="0.28"/><rect x="204" y="284.7" width="1" height="240.3" fill-opacity="0.07"/><rect x="205" y="284.7" width="1" height="240.3" fill-opacity="0.93"/><rect x="210" y="284.7" width="1" height="240.3" fill-opacity="0.41"/><rect x="211" y="284.7" width="1" height="240.3" fill-opacity="0.59"/><rect x="216" y="284.7" width="1" height="240.3" fill-opacity="0.75"/><rect x="217" y="284.7" width="1" height="240.3" fill-opacity="0.25"/><rect x="221" y="284.7" width="1" height="240.3" fill-opacity="0.09"/><rect x="222" y="284.7" width="1" height="240.3" fill-opacity="0.91"/><rect x="227" y="284.7" width="1" height="240.3" fill-opacity="0.44"/><rect x="228" y="284.7" width="1" height="240.3" fill-opacity="0.56"/><rect x="233" y="284.7" width="1" height="240.3" fill-opacity="0.78"/><rect x="234" y="284.7" width="1" height="240.3" fill-opacity="0.22"/><rect x="238" y="284.7" width="1" height="240.3" fill-opacity="0.12"/><rect x="239" y="284.7" width="1" height="240.3" fill-opacity="0.88"/><rect x="244" y="284.7" width="1" height="240.3" fill-opacity="0.46"/><rect x="245" y="284.7" width="1" height="240.3" fill-opacity="0.54"/><rect x="250" y="284.7" width="1" height="240.3" fill-opacity="0.81"/><rect x="251" y="284.7" width="1" height="240.3" fill-opacity="0.19"/><rect x="255" y="284.7" width="1" height="240.3" fill-opacity="0.15"/><rect x="256" y="284.7" width="1" height="240.3" fill-opacity="0.85"/><rect x="261" y="284.7" width="1" height="240.3" fill-opacity="0.49"/><rect x="262" y="284.7" width="1" height="240.3" fill-opacity="0.51"/><rect x="267" y="284.7" width="1" height="240.3" fill-opacity="0.83"/><rect x="268" y="284.7" width="1" height="240.3" fill-opacity="0.17"/><rect x="272" y="284.7" width="1" height="240.3" fill-opacity="0.18"/><rect x="273" y="284.7" width="1" height="240.3" fill-opacity="0.82"/><rect x="278" y="284.7" width="1" height="240.3" fill-opacity="0.52"/><rect x="279" y="284.7" width="1" height="240.3" fill-opacity="0.48"/><rect x="284" y="284.7" width="1" height="240.3" fill-opacity="0.86"/><rect x="285" y="284.7" width="1" height="240.3" fill-opacity="0.14"/><rect x="289" y="284.7" width="1" height="240.3" fill-opacity="0.20"/><rect x="290" y="284.7" width="1" height="240.3" fill-opacity="0.80"/><rect x="295" y="284.7" width="1" height="240.3" fill-opacity="0.55"/><rect x="296" y="284.7" width="1" height="240.3" fill-opacity="0.45"/><rect x="301" y="284.7" width="1" height="240.3" fill-opacity="0.89"/><rect x="302" y="284.7" width="1" height="240.3" fill-opacity="0.11"/><rect x="306" y="284.7" width="1" height="240.3" fill-opacity="0.23"/><rect x="307" y="284.7" width="1" height="240.3" fill-opacity="0.77"/><rect x="312" y="284.7" width="1" height="240.3" fill-opacity="0.57"/><rect x="313" y="284.7" width="1" height="240.3" fill-opacity="0.43"/><rect x="318" y="284.7" width="1" height="240.3" fill-opacity="0.92"/><rect x="319" y="284.7" width="1" height="240.3" fill-opacity="0.08"/><rect x="323" y="284.7" width="1" height="240.3" fill-opacity="0.26"/><rect x="324" y="284.7" width="1" height="240.3" fill-opacity="0.74"/><rect x="329" y="284.7" width="1" height="240.3" fill-opacity="0.60"/><rect x="330" y="284.7" width="1" height="240.3" fill-opacity="0.40"/><rect x="335" y="284.7" width="1" height="240.3" fill-opacity="0.94"/><rect x="336" y="284.7" width="1" height="240.3" fill-opacity="0.06"/><rect x="340" y="284.7" width="1" height="240.3" fill-opacity="0.29"/><rect x="341" y="284.7" width="1" height="240.3" fill-opacity="0.71"/><rect x="346" y="284.7" width="1" height="240.3" fill-opacity="0.63"/><rect x="347" y="284.7" width="1" height="240.3" fill-opacity="0.37"/><rect x="352" y="284.7" width="1" height="240.3" fill-opacity="0.97"/><rect x="357" y="284.7" width="1" height="240.3" fill-opacity="0.31"/><rect x="358" y="284.7" width="1" height="240.3" fill-opacity="0.69"/><rect x="363" y="284.7" width="1" height="240.3" fill-opacity="0.66"/><rect x="364" y="284.7" width="1" height="240.3" fill-opacity="0.34"/><rect x="369" y="284.7" width="1" height="240.3" fill-opacity="1.00"/><rect x="374" y="284.7" width="1" height="240.3" fill-opacity="0.34"/><rect x="375" y="284.7" width="1" height="240.3" fill-opacity="0.66"/><rect x="380" y="284.7" width="1" height="240.3" fill-opacity="0.68"/><rect x="381" y="284.7" width="1" height="240.3" fill-opacity="0.32"/><rect x="386" y="284.7" width="1" height="240.3" fill-opacity="0.97"/><rect x="391" y="284.7" width="1" height="240.3" fill-opacity="0.37"/><rect x="392" y="284.7" width="1" height="240.3" fill-opacity="0.63"/><rect x="397" y="284.7" width="1" height="240.3" fill-opacity="0.71"/><rect x="398" y="284.7" width="1" height="240.3" fill-opacity="0.29"/><rect x="402" y="284.7" width="1" height="240.3" fill-opacity="0.05"/><rect x="403" y="284.7" width="1" height="240.3" fill-opacity="0.95"/><rect x="408" y="284.7" width="1" height="240.3" fill-opacity="0.40"/><rect x="409" y="284.7" width="1" height="240.3" fill-opacity="0.60"/><rect x="414" y="284.7" width="1" height="240.3" fill-opacity="0.74"/><rect x="415" y="284.7" width="1" height="240.3" fill-opacity="0.26"/><rect x="419" y="284.7" width="1" height="240.3" fill-opacity="0.08"/><rect x="420" y="284.7" width="1" height="240.3" fill-opacity="0.92"/><rect x="425" y="284.7" width="1" height="240.3" fill-opacity="0.42"/><rect x="426" y="284.7" width="1" height="240.3" fill-opacity="0.58"/><rect x="431" y="284.7" width="1" height="240.3" fill-opacity="0.77"/><rect x="432" y="284.7" width="1" height="240.3" fill-opacity="0.23"/><rect x="436" y="284.7" width="1" height="240.3" fill-opacity="0.11"/><rect x="437" y="284.7" width="1" height="240.3" fill-opacity="0.89"/><rect x="442" y="284.7" width="1" height="240.3" fill-opacity="0.45"/><rect x="443" y="284.7" width="1" height="240.3" fill-opacity="0.55"/><rect x="448" y="284.7" width="1" height="240.3" fill-opacity="0.79"/><rect x="449" y="284.7" width="1" height="240.3" fill-opacity="0.21"/><rect x="453" y="284.7" width="1" height="240.3" fill-opacity="0.14"/><rect x="454" y="284.7" width="1" height="240.3" fill-opacity="0.86"/><rect x="459" y="284.7" width="1" height="240.3" fill-opacity="0.48"/><rect x="460" y="284.7" width="1" height="240.3" fill-opacity="0.52"/><rect x="465" y="284.7" width="1" height="240.3" fill-opacity="0.82"/><rect x="466" y="284.7" width="1" height="240.3" fill-opacity="0.18"/><rect x="470" y="284.7" width="1" height="240.3" fill-opacity="0.16"/><rect x="471" y="284.7" width="1" height="240.3" fill-opacity="0.84"/><rect x="476" y="284.7" width="1" height="240.3" fill-opacity="0.51"/><rect x="477" y="284.7" width="1" height="240.3" fill-opacity="0.49"/><rect x="482" y="284.7" width="1" height="240.3" fill-opacity="0.85"/><rect x="483" y="284.7" width="1" height="240.3" fill-opacity="0.15"/><rect x="487" y="284.7" width="1" height="240.3" fill-opacity="0.19"/><rect x="488" y="284.7" width="1" height="240.3" fill-opacity="0.81"/><rect x="493" y="284.7" width="1" height="240.3" fill-opacity="0.53"/><rect x="494" y="284.7" width="1" height="240.3" fill-opacity="0.47"/><rect x="499" y="284.7" width="1" height="240.3" fill-opacity="0.88"/><rect x="500" y="284.7" width="1" height="240.3" fill-opacity="0.12"/><rect x="504" y="284.7" width="1" height="240.3" fill-opacity="0.22"/><rect x="505" y="284.7" width="1" height="240.3" fill-opacity="0.78"/><rect x="510" y="284.7" width="1" height="240.3" fill-opacity="0.56"/><rect x="511" y="284.7" width="1" height="240.3" fill-opacity="0.44"/><rect x="516" y="284.7" width="1" height="240.3" fill-opacity="0.90"/><rect x="517" y="284.7" width="1" height="240.3" fill-opacity="0.10"/><rect x="521" y="284.7" width="1" height="240.3" fill-opacity="0.25"/><rect x="522" y="284.7" width="1" height="240.3" fill-opacity="0.75"/><rect x="527" y="284.7" width="1" height="240.3" fill-opacity="0.59"/><rect x="528" y="284.7" width="1" height="240.3" fill-opacity="0.41"/><rect x="533" y="284.7" width="1" height="240.3" fill-opacity="0.93"/><rect x="534" y="284.7" width="1" height="240.3" fill-opacity="0.07"/><rect x="538" y="284.7" width="1" height="240.3" fill-opacity="0.27"/><rect x="539" y="284.7" width="1" height="240.3" fill-opacity="0.73"/><rect x="544" y="284.7" width="1" height="240.3" fill-opacity="0.62"/><rect x="545" y="284.7" width="1" height="240.3" fill-opacity="0.38"/><rect x="550" y="284.7" width="1" height="240.3" fill-opacity="0.96"/><rect x="551" y="284.7" width="1" height="240.3" fill-opacity="0.04"/><rect x="555" y="284.7" width="1" height="240.3" fill-opacity="0.30"/><rect x="556" y="284.7" width="1" height="240.3" fill-opacity="0.70"/><rect x="561" y="284.7" width="1" height="240.3" fill-opacity="0.64"/><rect x="562" y="284.7" width="1" height="240.3" fill-opacity="0.36"/><rect x="567" y="284.7" width="1" height="240.3" fill-opacity="0.99"/><rect x="572" y="284.7" width="1" height="240.3" fill-opacity="0.33"/><rect x="573" y="284.7" width="1" height="240.3" fill-opacity="0.67"/><rect x="578" y="284.7" width="1" height="240.3" fill-opacity="0.67"/><rect x="579" y="284.7" width="1" height="240.3" fill-opacity="0.33"/><rect x="584" y="284.7" width="1" height="240.3" fill-opacity="0.99"/><rect x="589" y="284.7" width="1" height="240.3" fill-opacity="0.36"/><rect x="590" y="284.7" width="1" height="240.3" fill-opacity="0.64"/><rect x="595" y="284.7" width="1" height="240.3" fill-opacity="0.70"/><rect x="596" y="284.7" width="1" height="240.3" fill-opacity="0.30"/><rect x="600" y="284.7" width="1" height="240.3" fill-opacity="0.04"/><rect x="601" y="284.7" width="1" height="240.3" fill-opacity="0.96"/><rect x="606" y="284.7" width="1" height="240.3" fill-opacity="0.38"/><rect x="607" y="284.7" width="1" height="240.3" fill-opacity="0.62"/><rect x="612" y="284.7" width="1" height="240.3" fill-opacity="0.73"/><rect x="613" y="284.7" width="1" height="240.3" fill-opacity="0.27"/><rect x="617" y="284.7" width="1" height="240.3" fill-opacity="0.07"/><rect x="618" y="284.7" width="1" height="240.3" fill-opacity="0.93"/><rect x="623" y="284.7" width="1" height="240.3" fill-opacity="0.41"/><rect x="624" y="284.7" width="1" height="240.3" fill-opacity="0.59"/><rect x="629" y="284.7" width="1" height="240.3" fill-opacity="0.75"/><rect x="630" y="284.7" width="1" height="240.3" fill-opacity="0.25"/><rect x="634" y="284.7" width="1" height="240.3" fill-opacity="0.10"/><rect x="635" y="284.7" width="1" height="240.3" fill-opacity="0.90"/><rect x="640" y="284.7" width="1" height="240.3" fill-opacity="0.44"/><rect x="641" y="284.7" width="1" height="240.3" fill-opacity="0.56"/><rect x="646" y="284.7" width="1" height="240.3" fill-opacity="0.78"/><rect x="647" y="284.7" width="1" height="240.3" fill-opacity="0.22"/><rect x="651" y="284.7" width="1" height="240.3" fill-opacity="0.12"/><rect x="652" y="284.7" width="1" height="240.3" fill-opacity="0.88"/><rect x="657" y="284.7" width="1" height="240.3" fill-opacity="0.47"/><rect x="658" y="284.7" width="1" height="240.3" fill-opacity="0.53"/><rect x="663" y="284.7" width="1" height="240.3" fill-opacity="0.81"/><rect x="664" y="284.7" width="1" height="240.3" fill-opacity="0.19"/><rect x="668" y="284.7" width="1" height="240.3" fill-opacity="0.15"/><rect x="669" y="284.7" width="1" height="240.3" fill-opacity="0.85"/><rect x="674" y="284.7" width="1" height="240.3" fill-opacity="0.49"/><rect x="675" y="284.7" width="1" height="240.3" fill-opacity="0.51"/><rect x="680" y="284.7" width="1" height="240.3" fill-opacity="0.84"/><rect x="681" y="284.7" width="1" height="240.3" fill-opacity="0.16"/><rect x="685" y="284.7" width="1" height="240.3" fill-opacity="0.18"/><rect x="686" y="284.7" width="1" height="240.3" fill-opacity="0.82"/><rect x="691" y="284.7" width="1" height="240.3" fill-opacity="0.52"/><rect x="692" y="284.7" width="1" height="240.3" fill-opacity="0.48"/><rect x="697" y="284.7" width="1" height="240.3" fill-opacity="0.86"/><rect x="698" y="284.7" width="1" height="240.3" fill-opacity="0.14"/><rect x="702" y="284.7" width="1" height="240.3" fill-opacity="0.21"/><rect x="703" y="284.7" width="1" height="240.3" fill-opacity="0.79"/><rect x="708" y="284.7" width="1" height="240.3" fill-opacity="0.55"/><rect x="709" y="284.7" width="1" height="240.3" fill-opacity="0.45"/><rect x="714" y="284.7" width="1" height="240.3" fill-opacity="0.89"/><rect x="715" y="284.7" width="1" height="240.3" fill-opacity="0.11"/><rect x="719" y="284.7" width="1" height="240.3" fill-opacity="0.23"/><rect x="720" y="284.7" width="1" height="240.3" fill-opacity="0.77"/><rect x="725" y="284.7" width="1" height="240.3" fill-opacity="0.58"/><rect x="726" y="284.7" width="1" height="240.3" fill-opacity="0.42"/><rect x="731" y="284.7" width="1" height="240.3" fill-opacity="0.92"/><rect x="732" y="284.7" width="1" height="240.3" fill-opacity="0.08"/><rect x="736" y="284.7" width="1" height="240.3" fill-opacity="0.26"/><rect x="737" y="284.7" width="1" height="240.3" fill-opacity="0.74"/><rect x="742" y="284.7" width="1" height="240.3" fill-opacity="0.60"/><rect x="743" y="284.7" width="1" height="240.3" fill-opacity="0.40"/><rect x="748" y="284.7" width="1" height="240.3" fill-opacity="0.95"/><rect x="749" y="284.7" width="1" height="240.3" fill-opacity="0.05"/><rect x="753" y="284.7" width="1" height="240.3" fill-opacity="0.29"/><rect x="754" y="284.7" width="1" height="240.3" fill-opacity="0.71"/><rect x="759" y="284.7" width="1" height="240.3" fill-opacity="0.63"/><rect x="760" y="284.7" width="1" height="240.3" fill-opacity="0.37"/><rect x="765" y="284.7" width="1" height="240.3" fill-opacity="0.97"/><rect x="770" y="284.7" width="1" height="240.3" fill-opacity="0.32"/><rect x="771" y="284.7" width="1" height="240.3" fill-opacity="0.68"/><rect x="776" y="284.7" width="1" height="240.3" fill-opacity="0.66"/><rect x="777" y="284.7" width="1" height="240.3" fill-opacity="0.34"/><rect x="782" y="284.7" width="1" height="240.3" fill-opacity="1.00"/><rect x="787" y="284.7" width="1" height="240.3" fill-opacity="0.34"/><rect x="788" y="284.7" width="1" height="240.3" fill-opacity="0.66"/><rect x="793" y="284.7" width="1" height="240.3" fill-opacity="0.69"/><rect x="794" y="284.7" width="1" height="240.3" fill-opacity="0.31"/><rect x="799" y="284.7" width="1" height="240.3" fill-opacity="0.97"/><rect x="804" y="284.7" width="1" height="240.3" fill-opacity="0.37"/><rect x="805" y="284.7" width="1" height="240.3" fill-opacity="0.63"/><rect x="810" y="284.7" width="1" height="240.3" fill-opacity="0.71"/><rect x="811" y="284.7" width="1" height="240.3" fill-opacity="0.29"/><rect x="815" y="284.7" width="1" height="240.3" fill-opacity="0.06"/><rect x="816" y="284.7" width="1" height="240.3" fill-opacity="0.94"/><rect x="821" y="284.7" width="1" height="240.3" fill-opacity="0.40"/><rect x="822" y="284.7" width="1" height="240.3" fill-opacity="0.60"/><rect x="827" y="284.7" width="1" height="240.3" fill-opacity="0.74"/><rect x="828" y="284.7" width="1" height="240.3" fill-opacity="0.26"/><rect x="832" y="284.7" width="1" height="240.3" fill-opacity="0.08"/><rect x="833" y="284.7" width="1" height="240.3" fill-opacity="0.92"/><rect x="838" y="284.7" width="1" height="240.3" fill-opacity="0.43"/><rect x="839" y="284.7" width="1" height="240.3" fill-opacity="0.57"/><rect x="844" y="284.7" width="1" height="240.3" fill-opacity="0.77"/><rect x="845" y="284.7" width="1" height="240.3" fill-opacity="0.23"/><rect x="849" y="284.7" width="1" height="240.3" fill-opacity="0.11"/><rect x="850" y="284.7" width="1" height="240.3" fill-opacity="0.89"/><rect x="855" y="284.7" width="1" height="240.3" fill-opacity="0.45"/><rect x="856" y="284.7" width="1" height="240.3" fill-opacity="0.55"/><rect x="861" y="284.7" width="1" height="240.3" fill-opacity="0.80"/><rect x="862" y="284.7" width="1" height="240.3" fill-opacity="0.20"/><rect x="866" y="284.7" width="1" height="240.3" fill-opacity="0.14"/><rect x="867" y="284.7" width="1" height="240.3" fill-opacity="0.86"/><rect x="872" y="284.7" width="1" height="240.3" fill-opacity="0.48"/><rect x="873" y="284.7" width="1" height="240.3" fill-opacity="0.52"/><rect x="878" y="284.7" width="1" height="240.3" fill-opacity="0.82"/><rect x="879" y="284.7" width="1" height="240.3" fill-opacity="0.18"/><rect x="883" y="284.7" width="1" height="240.3" fill-opacity="0.17"/><rect x="884" y="284.7" width="1" height="240.3" fill-opacity="0.83"/><rect x="889" y="284.7" width="1" height="240.3" fill-opacity="0.51"/><rect x="890" y="284.7" width="1" height="240.3" fill-opacity="0.49"/><rect x="895" y="284.7" width="1" height="240.3" fill-opacity="0.85"/><rect x="896" y="284.7" width="1" height="240.3" fill-opacity="0.15"/><rect x="900" y="284.7" width="1" height="240.3" fill-opacity="0.19"/><rect x="901" y="284.7" width="1" height="240.3" fill-opacity="0.81"/><rect x="906" y="284.7" width="1" height="240.3" fill-opacity="0.54"/><rect x="907" y="284.7" width="1" height="240.3" fill-opacity="0.46"/><rect x="912" y="284.7" width="1" height="240.3" fill-opacity="0.88"/><rect x="913" y="284.7" width="1" height="240.3" fill-opacity="0.12"/><rect x="917" y="284.7" width="1" height="240.3" fill-opacity="0.22"/><rect x="918" y="284.7" width="1" height="240.3" fill-opacity="0.78"/><rect x="923" y="284.7" width="1" height="240.3" fill-opacity="0.56"/><rect x="924" y="284.7" width="1" height="240.3" fill-opacity="0.44"/><rect x="929" y="284.7" width="1" height="240.3" fill-opacity="0.91"/><rect x="930" y="284.7" width="1" height="240.3" fill-opacity="0.09"/><rect x="934" y="284.7" width="1" height="240.3" fill-opacity="0.25"/><rect x="935" y="284.7" width="1" height="240.3" fill-opacity="0.75"/><rect x="940" y="284.7" width="1" height="240.3" fill-opacity="0.59"/><rect x="941" y="284.7" width="1" height="240.3" fill-opacity="0.41"/><rect x="946" y="284.7" width="1" height="240.3" fill-opacity="0.93"/><rect x="947" y="284.7" width="1" height="240.3" fill-opacity="0.07"/><rect x="951" y="284.7" width="1" height="240.3" fill-opacity="0.28"/><rect x="952" y="284.7" width="1" height="240.3" fill-opacity="0.72"/><rect x="957" y="284.7" width="1" height="240.3" fill-opacity="0.62"/><rect x="958" y="284.7" width="1" height="240.3" fill-opacity="0.38"/><rect x="963" y="284.7" width="1" height="240.3" fill-opacity="0.96"/><rect x="968" y="284.7" width="1" height="240.3" fill-opacity="0.30"/><rect x="969" y="284.7" width="1" height="240.3" fill-opacity="0.70"/><rect x="974" y="284.7" width="1" height="240.3" fill-opacity="0.65"/><rect x="975" y="284.7" width="1" height="240.3" fill-opacity="0.35"/><rect x="980" y="284.7" width="1" height="240.3" fill-opacity="0.99"/><rect x="985" y="284.7" width="1" height="240.3" fill-opacity="0.33"/><rect x="986" y="284.7" width="1" height="240.3" fill-opacity="0.67"/><rect x="991" y="284.7" width="1" height="240.3" fill-opacity="0.67"/><rect x="992" y="284.7" width="1" height="240.3" fill-opacity="0.33"/><rect x="997" y="284.7" width="1" height="240.3" fill-opacity="0.98"/><rect x="1002" y="284.7" width="1" height="240.3" fill-opacity="0.36"/><rect x="1003" y="284.7" width="1" height="240.3" fill-opacity="0.64"/><rect x="1008" y="284.7" width="1" height="240.3" fill-opacity="0.70"/><rect x="1009" y="284.7" width="1" height="240.3" fill-opacity="0.30"/><rect x="1013" y="284.7" width="1" height="240.3" fill-opacity="0.04"/><rect x="1014" y="284.7" width="1" height="240.3" fill-opacity="0.96"/><rect x="1019" y="284.7" width="1" height="240.3" fill-opacity="0.39"/><rect x="1020" y="284.7" width="1" height="240.3" fill-opacity="0.61"/><rect x="1025" y="284.7" width="1" height="240.3" fill-opacity="0.73"/><rect x="1026" y="284.7" width="1" height="240.3" fill-opacity="0.27"/><rect x="1030" y="284.7" width="1" height="240.3" fill-opacity="0.07"/><rect x="1031" y="284.7" width="1" height="240.3" fill-opacity="0.93"/><rect x="1036" y="284.7" width="1" height="240.3" fill-opacity="0.41"/><rect x="1037" y="284.7" width="1" height="240.3" fill-opacity="0.59"/><rect x="1042" y="284.7" width="1" height="240.3" fill-opacity="0.75"/><rect x="1043" y="284.7" width="1" height="240.3" fill-opacity="0.25"/><rect x="1047" y="284.7" width="1" height="240.3" fill-opacity="0.10"/><rect x="1048" y="284.7" width="1" height="240.3" fill-opacity="0.90"/><rect x="1053" y="284.7" width="1" height="240.3" fill-opacity="0.44"/><rect x="1054" y="284.7" width="1" height="240.3" fill-opacity="0.56"/><rect x="1059" y="284.7" width="1" height="240.3" fill-opacity="0.78"/><rect x="1060" y="284.7" width="1" height="240.3" fill-opacity="0.22"/><rect x="1064" y="284.7" width="1" height="240.3" fill-opacity="0.12"/><rect x="1065" y="284.7" width="1" height="240.3" fill-opacity="0.88"/><rect x="1070" y="284.7" width="1" height="240.3" fill-opacity="0.47"/><rect x="1071" y="284.7" width="1" height="240.3" fill-opacity="0.53"/><rect x="1076" y="284.7" width="1" height="240.3" fill-opacity="0.81"/><rect x="1077" y="284.7" width="1" height="240.3" fill-opacity="0.19"/></g></g>
<rect x="0" y="284.7" width="1.3" height="240.3" fill="#9aaac0"/>
<g>
<circle class="c" cx="245.15" cy="402.91" r="11.30"/>
<path class="c" d="M245.15 388.80 L245.15 391.62"/>
<path class="c" d="M245.15 414.19 L245.15 417.02"/>
<path class="c" d="M242.32 395.85 L247.98 395.85"/>
<path class="c" d="M245.15 393.03 L245.15 398.68"/>
<path class="c" d="M242.32 409.96 L247.98 409.96"/>
<path class="h" d="M245.15 388.80 L273.44 388.80 L284.05 388.80"/>
<path class="w" d="M245.15 388.80 L273.44 388.80 L284.05 388.80"/>
<path class="h" d="M312.33 388.80 L313.04 388.80 L386.59 388.80"/>
<path class="w" d="M312.33 388.80 L313.04 388.80 L386.59 388.80"/>
<path class="h" d="M245.15 417.02 L273.44 417.02"/>
<path class="w" d="M245.15 417.02 L273.44 417.02"/>
<path class="h" d="M245.15 417.02 L245.15 433.95"/>
<path class="w" d="M245.15 417.02 L245.15 433.95"/>
<path class="c" d="M239.49 433.95 L250.81 433.95 L245.15 439.59 Z"/>
<path class="c" d="M273.44 388.80 L273.44 391.62 L279.10 394.44 L267.78 400.09 L279.10 405.73 L267.78 411.37 L273.44 414.19 L273.44 417.02"/>
<path class="c" d="M284.05 388.80 L286.87 388.80 L289.70 383.16 L295.36 394.44 L301.02 383.16 L306.68 394.44 L309.51 388.80 L312.33 388.80"/>
<path class="c" d="M313.04 388.80 L313.04 398.68"/>
<path class="c" d="M313.04 401.50 L313.04 411.37"/>
<rect class="c" x="307.38" y="398.68" width="11.32" height="2.82" rx="1.1"/>
<path class="h" d="M313.04 411.37 L313.04 417.02"/>
<path class="w" d="M313.04 411.37 L313.04 417.02"/>
<path class="h" d="M313.04 417.02 L346.99 417.02"/>
<path class="w" d="M313.04 417.02 L346.99 417.02"/>
<path class="h" d="M313.04 417.02 L313.04 428.30"/>
<path class="w" d="M313.04 417.02 L313.04 428.30"/>
<path class="c" d="M307.38 428.30 L318.70 428.30 L313.04 433.95 Z"/>
<path class="c" d="M346.99 388.80 L346.99 391.62 L352.64 394.44 L341.33 400.09 L352.64 405.73 L341.33 411.37 L346.99 414.19 L346.99 417.02"/>
<path class="c" d="M386.59 371.87 L386.59 394.44 L409.22 383.16 Z"/>
<path class="c" d="M388.71 377.51 L391.54 377.51"/>
<path class="c" d="M388.71 388.80 L391.54 388.80"/>
<path class="c" d="M390.13 387.39 L390.13 390.21"/>
<path class="c" d="M397.91 371.87 L397.91 377.51"/>
<path class="c" d="M397.91 388.80 L397.91 394.44"/>
<path class="c" d="M400.03 376.10 L402.86 376.10"/>
<path class="c" d="M401.44 374.69 L401.44 377.51"/>
<path class="c" d="M400.03 390.21 L402.86 390.21"/>
<path class="h" d="M386.59 377.51 L363.96 377.51 L363.96 354.94 L437.51 354.94 L437.51 383.16"/>
<path class="w" d="M386.59 377.51 L363.96 377.51 L363.96 354.94 L437.51 354.94 L437.51 383.16"/>
<path class="h" d="M409.22 383.16 L437.51 383.16"/>
<path class="w" d="M409.22 383.16 L437.51 383.16"/>
<path class="c" d="M437.51 383.16 L440.34 383.16 L443.17 377.51 L448.82 388.80 L454.48 377.51 L460.14 388.80 L462.97 383.16 L465.80 383.16"/>
<path class="h" d="M465.80 383.16 L482.77 383.16"/>
<path class="w" d="M465.80 383.16 L482.77 383.16"/>
<path class="c" d="M482.77 400.09 L482.77 377.51 L505.40 388.80 Z"/>
<path class="c" d="M484.89 394.44 L487.72 394.44"/>
<path class="c" d="M484.89 383.16 L487.72 383.16"/>
<path class="c" d="M486.31 384.57 L486.31 381.75"/>
<path class="c" d="M494.08 400.09 L494.08 394.44"/>
<path class="c" d="M494.08 383.16 L494.08 377.51"/>
<path class="c" d="M496.21 395.85 L499.03 395.85"/>
<path class="c" d="M497.62 397.26 L497.62 394.44"/>
<path class="c" d="M496.21 381.75 L499.03 381.75"/>
<path class="h" d="M494.08 377.51 L494.08 360.58 L482.77 360.58"/>
<path class="w" d="M494.08 377.51 L494.08 360.58 L482.77 360.58"/>
<path class="h" d="M482.77 394.44 L471.45 394.44 L471.45 433.95"/>
<path class="w" d="M482.77 394.44 L471.45 394.44 L471.45 433.95"/>
<path class="h" d="M505.40 388.80 L533.69 388.80"/>
<path class="w" d="M505.40 388.80 L533.69 388.80"/>
<path class="h" d="M533.69 360.58 L533.69 433.95"/>
<path class="w" d="M533.69 360.58 L533.69 433.95"/>
<path class="c" d="M481.35 433.95 L484.18 433.95 L487.01 428.30 L492.67 439.59 L498.33 428.30 L503.99 439.59 L506.81 433.95 L509.64 433.95"/>
<path class="h" d="M471.45 433.95 L481.35 433.95"/>
<path class="w" d="M471.45 433.95 L481.35 433.95"/>
<path class="h" d="M509.64 433.95 L533.69 433.95"/>
<path class="w" d="M509.64 433.95 L533.69 433.95"/>
<path class="c" d="M471.45 433.95 L471.45 436.77 L477.11 439.59 L465.80 445.23 L477.11 450.88 L465.80 456.52 L471.45 459.34 L471.45 462.16"/>
<path class="c" d="M465.80 462.16 L477.11 462.16 L471.45 467.80 Z"/>
<path class="h" d="M494.08 400.09 L494.08 405.02"/>
<path class="w" d="M494.08 400.09 L494.08 405.02"/>
<path class="h" d="M533.69 388.80 L539.35 388.80"/>
<path class="w" d="M533.69 388.80 L539.35 388.80"/>
<path class="c" d="M539.35 388.80 L542.17 388.80 L545.00 383.16 L550.66 394.44 L556.32 383.16 L561.98 394.44 L564.80 388.80 L567.63 388.80"/>
<path class="h" d="M567.63 388.80 L584.61 388.80"/>
<path class="w" d="M567.63 388.80 L584.61 388.80"/>
<path class="c" d="M584.61 388.80 L587.43 388.80 L590.26 383.16 L595.92 394.44 L601.58 383.16 L607.24 394.44 L610.07 388.80 L612.89 388.80"/>
<path class="h" d="M612.89 388.80 L629.87 388.80"/>
<path class="w" d="M612.89 388.80 L629.87 388.80"/>
<path class="c" d="M629.87 388.80 L632.70 388.80 L635.52 383.16 L641.18 394.44 L646.84 383.16 L652.50 394.44 L655.33 388.80 L658.15 388.80"/>
<path class="h" d="M658.15 388.80 L680.79 388.80"/>
<path class="w" d="M658.15 388.80 L680.79 388.80"/>
<path class="c" d="M680.79 388.80 L683.61 388.80 L686.44 383.16 L692.10 394.44 L697.76 383.16 L703.42 394.44 L706.24 388.80 L709.07 388.80"/>
<path class="h" d="M709.07 388.80 L731.70 388.80"/>
<path class="w" d="M709.07 388.80 L731.70 388.80"/>
<path class="c" d="M567.63 388.80 L567.63 398.68"/>
<path class="c" d="M567.63 401.50 L567.63 411.37"/>
<rect class="c" x="561.98" y="398.68" width="11.32" height="2.82" rx="1.1"/>
<path class="c" d="M612.89 388.80 L612.89 398.68"/>
<path class="c" d="M612.89 401.50 L612.89 411.37"/>
<rect class="c" x="607.24" y="398.68" width="11.32" height="2.82" rx="1.1"/>
<path class="c" d="M669.47 388.80 L669.47 398.68"/>
<path class="c" d="M669.47 401.50 L669.47 411.37"/>
<rect class="c" x="663.81" y="398.68" width="11.32" height="2.82" rx="1.1"/>
<path class="h" d="M567.63 411.37 L567.63 433.95 L669.47 433.95 L669.47 411.37"/>
<path class="w" d="M567.63 411.37 L567.63 433.95 L669.47 433.95 L669.47 411.37"/>
<path class="h" d="M612.89 411.37 L612.89 433.95"/>
<path class="w" d="M612.89 411.37 L612.89 433.95"/>
<path class="h" d="M612.89 433.95 L612.89 450.88"/>
<path class="w" d="M612.89 433.95 L612.89 450.88"/>
<path class="c" d="M607.24 450.88 L618.55 450.88 L612.89 456.52 Z"/>
<path class="h" d="M533.69 360.58 L624.21 360.58"/>
<path class="w" d="M533.69 360.58 L624.21 360.58"/>
<path class="c" d="M624.21 360.58 L627.04 360.58 L629.87 354.94 L635.52 366.23 L641.18 354.94 L646.84 366.23 L649.67 360.58 L652.50 360.58"/>
<path class="h" d="M652.50 360.58 L714.73 360.58 L714.73 388.80"/>
<path class="w" d="M652.50 360.58 L714.73 360.58 L714.73 388.80"/>
<path class="c" d="M731.70 388.80 L734.53 388.80 L737.36 383.16 L743.02 394.44 L748.68 383.16 L754.33 394.44 L757.16 388.80 L759.99 388.80"/>
<path class="h" d="M759.99 388.80 L788.28 388.80"/>
<path class="w" d="M759.99 388.80 L788.28 388.80"/>
<path class="c" d="M731.70 411.37 L734.53 411.37 L737.36 405.73 L743.02 417.02 L748.68 405.73 L754.33 417.02 L757.16 411.37 L759.99 411.37"/>
<path class="h" d="M759.99 411.37 L788.28 411.37"/>
<path class="w" d="M759.99 411.37 L788.28 411.37"/>
<path class="c" d="M731.70 411.37 L731.70 414.19 L737.36 417.02 L726.05 422.66 L737.36 428.30 L726.05 433.95 L731.70 436.77 L731.70 439.59"/>
<path class="c" d="M726.05 439.59 L737.36 439.59 L731.70 445.23 Z"/>
<path class="h" d="M765.65 338.01 L782.62 338.01"/>
<path class="w" d="M765.65 338.01 L782.62 338.01"/>
<path class="c" d="M782.62 338.01 L785.45 338.01 L788.28 332.37 L793.94 343.65 L799.59 332.37 L805.25 343.65 L808.08 338.01 L810.91 338.01"/>
<path class="h" d="M810.91 338.01 L856.17 338.01 L856.17 388.80"/>
<path class="w" d="M810.91 338.01 L856.17 338.01 L856.17 388.80"/>
<path class="h" d="M765.65 338.01 L765.65 467.80 L782.62 467.80"/>
<path class="w" d="M765.65 338.01 L765.65 467.80 L782.62 467.80"/>
<path class="c" d="M782.62 467.80 L785.45 467.80 L788.28 462.16 L793.94 473.45 L799.59 462.16 L805.25 473.45 L808.08 467.80 L810.91 467.80"/>
<path class="h" d="M810.91 467.80 L856.17 467.80 L856.17 411.37"/>
<path class="w" d="M810.91 467.80 L856.17 467.80 L856.17 411.37"/>
<path class="c" d="M788.28 366.23 L788.28 433.95 L844.86 400.09 Z"/>
<circle class="c" cx="828.24" cy="388.80" r="1.3"/>
<path class="h" d="M829.65 388.80 L901.43 388.80"/>
<path class="w" d="M829.65 388.80 L901.43 388.80"/>
<path class="h" d="M826.47 411.37 L901.43 411.37"/>
<path class="w" d="M826.47 411.37 L901.43 411.37"/>
<path class="c" d="M799.59 359.53 L799.59 372.93"/>
<path class="c" d="M799.59 427.24 L799.59 433.95"/>
<path class="c" d="M810.91 420.54 L810.91 433.95"/>
<circle class="c" cx="346.99" cy="487.56" r="11.30"/>
<path class="c" d="M346.99 473.45 L346.99 476.27"/>
<path class="c" d="M346.99 498.84 L346.99 501.66"/>
<path class="c" d="M344.16 480.50 L349.82 480.50"/>
<path class="c" d="M346.99 477.68 L346.99 483.32"/>
<path class="c" d="M344.16 494.61 L349.82 494.61"/>
<path class="c" d="M341.33 501.66 L352.64 501.66 L346.99 507.31 Z"/>
<circle class="c" cx="397.91" cy="487.56" r="11.30"/>
<path class="c" d="M397.91 473.45 L397.91 476.27"/>
<path class="c" d="M397.91 498.84 L397.91 501.66"/>
<path class="c" d="M395.08 494.61 L400.73 494.61"/>
<path class="c" d="M397.91 491.79 L397.91 497.43"/>
<path class="c" d="M395.08 480.50 L400.73 480.50"/>
<path class="c" d="M392.25 501.66 L403.56 501.66 L397.91 507.31 Z"/>
<circle class="c" cx="437.51" cy="487.56" r="11.30"/>
<path class="c" d="M437.51 473.45 L437.51 476.27"/>
<path class="c" d="M437.51 498.84 L437.51 501.66"/>
<path class="c" d="M434.68 480.50 L440.34 480.50"/>
<path class="c" d="M437.51 477.68 L437.51 483.32"/>
<path class="c" d="M434.68 494.61 L440.34 494.61"/>
<path class="c" d="M431.85 501.66 L443.17 501.66 L437.51 507.31 Z"/>
<rect x="243.15" y="415.02" width="4" height="4" rx="1.2" fill="#0000f4"/><rect x="271.44" y="386.80" width="4" height="4" rx="1.2" fill="#0000f4"/><rect x="311.04" y="386.80" width="4" height="4" rx="1.2" fill="#0000f4"/><rect x="311.04" y="415.02" width="4" height="4" rx="1.2" fill="#0000f4"/><rect x="344.99" y="386.80" width="4" height="4" rx="1.2" fill="#0000f4"/><rect x="435.51" y="381.16" width="4" height="4" rx="1.2" fill="#0000f4"/><rect x="531.69" y="386.80" width="4" height="4" rx="1.2" fill="#0000f4"/><rect x="469.45" y="431.95" width="4" height="4" rx="1.2" fill="#0000f4"/><rect x="565.63" y="386.80" width="4" height="4" rx="1.2" fill="#0000f4"/><rect x="610.89" y="386.80" width="4" height="4" rx="1.2" fill="#0000f4"/><rect x="667.47" y="386.80" width="4" height="4" rx="1.2" fill="#0000f4"/><rect x="712.73" y="386.80" width="4" height="4" rx="1.2" fill="#0000f4"/><rect x="610.89" y="431.95" width="4" height="4" rx="1.2" fill="#0000f4"/><rect x="763.65" y="386.80" width="4" height="4" rx="1.2" fill="#0000f4"/><rect x="763.65" y="409.37" width="4" height="4" rx="1.2" fill="#0000f4"/><rect x="854.17" y="386.80" width="4" height="4" rx="1.2" fill="#0000f4"/><rect x="854.17" y="409.37" width="4" height="4" rx="1.2" fill="#0000f4"/>
</g>
<text class="b" x="245.6" y="378.1">±5V</text>
<text class="t" x="280.6" y="382.5">R1</text>
<text class="t" x="310" y="384.4">1k</text>
<text class="t" x="279.4" y="396.9">R4</text>
<text class="t" x="274.4" y="413.75">1000k</text>
<text class="t" x="314.4" y="398.1">C12</text>
<text class="t" x="314.4" y="409.6">390p</text>
<text class="t" x="222.5" y="405.6">V3</text>
<text class="t" x="353.8" y="400.6">R2</text>
<text class="t" x="353.5" y="412.3">100k</text>
<text class="t" x="373.75" y="386">U5</text>
<text class="t" x="405" y="391.9" textLength="26.5" lengthAdjust="spacingAndGlyphs">AD822</text>
<text class="t" transform="translate(400.60,370.20) rotate(-90)" x="0" y="0" text-anchor="start">+6</text>
<text class="t" transform="translate(400.60,394.50) rotate(-90)" x="0" y="0" text-anchor="end">-6</text>
<text class="t" x="446.25" y="375.6">R3</text>
<text class="t" x="447" y="396.9">1k</text>
<text class="t" x="481.9" y="363.75" text-anchor="end">-6</text>
<text class="t" x="500" y="381.25" textLength="26.5" lengthAdjust="spacingAndGlyphs">AD822</text>
<text class="t" x="500" y="403.1">U6</text>
<text class="t" transform="translate(496.20,405.70) rotate(-90)" x="0" y="0" text-anchor="end">+6</text>
<text class="t" x="538" y="382.5">R5</text>
<text class="t" x="558.75" y="382.5">1k</text>
<text class="t" x="570.6" y="412">C1</text>
<text class="t" x="570.6" y="422.5">390p</text>
<text class="t" x="620" y="354.4">R14</text>
<text class="t" x="646" y="354.4">0</text>
<text class="t" x="583" y="382.5">R6</text>
<text class="t" x="601" y="382.5">100</text>
<text class="t" x="628.75" y="382.5">R7</text>
<text class="t" x="649" y="382.5">1k</text>
<text class="t" x="680" y="382.5">R8</text>
<text class="t" x="700" y="382.5">50</text>
<text class="t" x="615.6" y="412">C2</text>
<text class="t" x="615.6" y="422.5">3.3n</text>
<text class="t" x="671.2" y="412">C3</text>
<text class="t" x="671.2" y="422.5">330p</text>
<text class="t" x="501" y="431.7">R20</text>
<text class="t" x="521.7" y="431.7">1k</text>
<text class="t" x="478.3" y="445.7">R21</text>
<text class="t" x="478.3" y="459">10k</text>
<text class="t" x="778.75" y="331.9">R12</text>
<text class="t" x="802" y="331.9">1k</text>
<text class="t" transform="translate(802.60,358.70) rotate(-90)" x="0" y="0" text-anchor="start">+6</text>
<text class="t" x="816" y="369.4">U1</text>
<text class="t" x="816" y="380.6">AD8137</text>
<text class="t" x="730.4" y="383.3">R9</text>
<text class="t" x="751" y="382.5">1k</text>
<text class="t" x="727.4" y="405.3">R10</text>
<text class="t" x="751" y="405">1k</text>
<text class="t" x="738.8" y="423">R11</text>
<text class="t" x="738.8" y="435.8">0</text>
<text class="b" x="879.4" y="398.1">+5.5V</text>
<text class="b" x="879" y="408.8">-5.5V</text>
<text class="t" x="778.75" y="461.9">R13</text>
<text class="t" x="802" y="461.9">1k</text>
<text class="t" transform="translate(802.60,433.80) rotate(-90)" x="0" y="0" text-anchor="end">-6</text>
<text class="t" transform="translate(813.80,434.40) rotate(-90)" x="0" y="0" text-anchor="end">+2.5</text>
<text class="p" x="793.5" y="380.3" textLength="10.5" lengthAdjust="spacingAndGlyphs">VS+</text>
<text class="p" x="792" y="390.8" textLength="8.8" lengthAdjust="spacingAndGlyphs">+IN</text>
<text class="p" x="818.8" y="396.9" textLength="11.6" lengthAdjust="spacingAndGlyphs">-OUT</text>
<text class="p" x="816.8" y="407.5" textLength="13.6" lengthAdjust="spacingAndGlyphs">+OUT</text>
<text class="p" x="791" y="413" textLength="7.8" lengthAdjust="spacingAndGlyphs">-IN</text>
<text class="p" x="795" y="422.8" textLength="8.8" lengthAdjust="spacingAndGlyphs">VS-</text>
<text class="p" x="816" y="422.8" textLength="15" lengthAdjust="spacingAndGlyphs">VOCM</text>
<text class="t" x="210.4" y="452.8" textLength="99.4" lengthAdjust="spacing">SINE(0 5 1000 0 0 0 10)</text>
<text class="t" x="216.9" y="473.75">.tran 10m</text>
<text class="t" transform="translate(349.70,473.10) rotate(-90)" x="0" y="0" text-anchor="start">+6</text>
<text class="t" x="355" y="477">V4</text>
<text class="t" x="361" y="492.5">6</text>
<text class="t" transform="translate(401.00,473.30) rotate(-90)" x="0" y="0" text-anchor="start">-6</text>
<text class="t" x="403.75" y="477.5">V5</text>
<text class="t" x="379.4" y="490">6</text>
<text class="t" transform="translate(440.50,472.70) rotate(-90)" x="0" y="0" text-anchor="start">+2.5</text>
<text class="t" x="446" y="477.3">V6</text>
<text class="t" x="452" y="493.3">2.5</text>
<mask id="wm1"><rect x="740" y="455" width="80" height="50" fill="#fff"/><ellipse cx="789.3" cy="484.5" rx="14.2" ry="11.1" fill="#000"/><circle cx="770.3" cy="471.8" r="1.8" fill="#000"/><circle cx="780.1" cy="471.8" r="1.8" fill="#000"/></mask>
<mask id="wm2"><rect x="740" y="455" width="80" height="50" fill="#fff"/><circle cx="785.1" cy="482.3" r="1.7" fill="#000"/><circle cx="793.5" cy="482.3" r="1.7" fill="#000"/></mask>
<g opacity="0.29">
<g mask="url(#wm1)" fill="#000"><ellipse cx="775.35" cy="475.6" rx="14.5" ry="11.8"/><path d="M765.5 484 L764.8 490.8 L772 486.5 Z"/></g>
<g mask="url(#wm2)" fill="#000"><ellipse cx="789.3" cy="484.5" rx="12.8" ry="9.8"/><path d="M793 492 L798 497.8 L797.5 490 Z"/></g>
<g stroke="#000" stroke-width="2.4" fill="none" stroke-linecap="butt" stroke-linejoin="miter">
<path d="M822.3 468.3 Q819.5 475 811.7 480.9"/><path d="M827.7 468.3 Q831 475 838.5 480.9"/>
<path d="M824.3 478.3 L815.3 491.7 L834 490.5"/><path d="M828 484 L835.5 493.9"/>
<path d="M856.7 468 Q851 474 843.3 478.4"/><path d="M856.7 468 Q862 474 870.5 477.5"/>
<path d="M851 477.3 Q849.5 487 843.7 493.5"/><path d="M851.4 482.3 L855.9 488.2"/>
<path d="M862 477.3 Q860.5 487 854 493.9"/><path d="M862.7 483 Q866 488.5 870.7 493.2"/>
<path d="M879.9 468.9 H897.2 V475 H879.9 Z"/><path d="M874.3 480 H902.3"/>
<path d="M881.5 480.5 L880.9 485 H897.4 V492 Q897.4 493.1 895.5 493.1 H886.7"/>
</g>
<circle cx="918" cy="481.7" r="2.2" fill="#000"/>
<text x="938.6" y="492.6" textLength="107.2" lengthAdjust="spacingAndGlyphs" style="font-size:31.5px;fill:#000">bi4wms</text>
</g>
</svg></body></html>
